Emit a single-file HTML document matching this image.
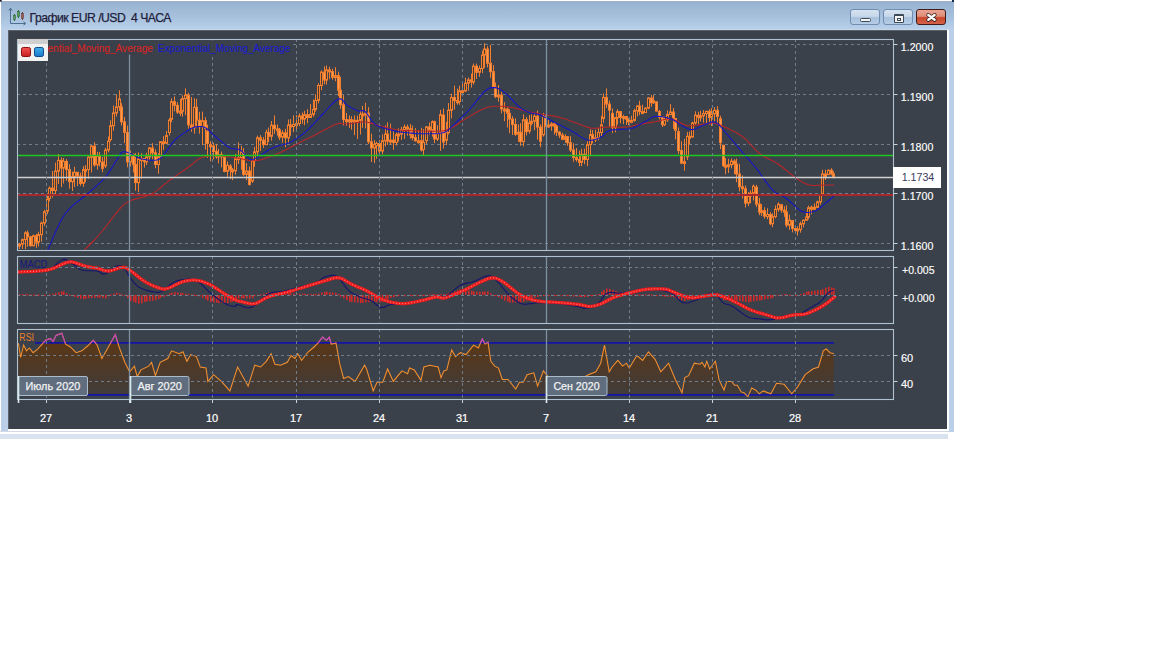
<!DOCTYPE html>
<html><head><meta charset="utf-8"><style>
html,body{margin:0;padding:0;width:1152px;height:648px;overflow:hidden;background:#ffffff;position:relative;font-family:"Liberation Sans",sans-serif}
div{position:absolute;box-sizing:border-box}
#frame{left:1px;top:1px;width:953px;height:431px;background:#bccfe8;border-top:1px solid #9fb0c2}
#title{left:1px;top:2px;width:953px;height:27px;background:linear-gradient(#97b3d1,#a7c0dc 55%,#b8d0ea)}
#tline{left:8px;top:29px;width:941px;height:1px;background:#c6d7ea}
#ttext{left:29.5px;top:10.5px;font-size:12.2px;color:#1e1e3c;white-space:pre;letter-spacing:-0.5px;-webkit-text-stroke:0.25px #1e1e3c}
#dark{left:8px;top:30px;width:939px;height:398.5px;background:#3b414a;border-left:1px solid #5b626b;border-top:1px solid #5a6068}
#wline{left:8px;top:428.5px;width:941px;height:2.5px;background:#ffffff}
#rline{left:947px;top:30px;width:2px;height:400px;background:#ffffff}
#gline{left:0px;top:431px;width:948px;height:1px;background:#d4d9e4}
#bot{left:0;top:432px;width:948px;height:7px;background:#d9e3ef;border-top:2px solid #ffffff}
.btn{top:9px;width:30px;height:16px;border:1px solid #6f8db0;border-radius:3px;background:linear-gradient(#d5e2f0 0%,#c8d8ea 45%,#a8c1dc 55%,#b6cde6 100%)}
.close{border-color:#3e1c1c;background:linear-gradient(#eaa492 0%,#de8c78 45%,#c8462a 55%,#d4644a 100%)}
</style></head><body>
<div id="frame"></div>
<div style="left:0;top:0;width:2px;height:2px;background:#2a2a3a;border-radius:0 0 2px 0"></div>
<div style="left:952px;top:0;width:2px;height:2px;background:#1a2a4a"></div>
<div id="title"></div>
<div id="tline"></div>
<div id="gline"></div>
<div id="bot"></div>
<svg width="20" height="20" style="position:absolute;left:7px;top:6px">
<path d="M3.5 17.5 V2.5 M1.8 4.5 L3.5 2.2 L5.2 4.5 M3.5 17.5 H18.5 M16.5 15.8 L18.7 17.5 L16.5 19.2" fill="none" stroke="#4e7090" stroke-width="1"/>
<path d="M7.5 8 V15" stroke="#2f6a3a" stroke-width="1"/><rect x="6.5" y="9.5" width="2" height="4" fill="#5c9c5c" stroke="#2f6a3a" stroke-width="0.6"/>
<path d="M11.5 4 V12" stroke="#2f6a3a" stroke-width="1"/><rect x="10.5" y="5.5" width="2" height="5" fill="#5c9c5c" stroke="#2f6a3a" stroke-width="0.6"/>
<path d="M15.5 6 V14" stroke="#6a3a3a" stroke-width="1"/><rect x="14.5" y="7.5" width="2" height="5" fill="#a06060" stroke="#6a3a3a" stroke-width="0.6"/>
</svg>
<div id="ttext">График EUR /USD  4 ЧАСА</div>
<div class="btn" style="left:850px"><div style="left:9px;top:7.5px;width:11px;height:4.5px;background:#f4f4f4;border:1px solid #3c4a58;border-radius:1.5px"></div></div>
<div class="btn" style="left:883px"><div style="left:10px;top:4px;width:10px;height:9px;background:#f4f4f4;border:1px solid #3c4a58;border-top-width:2px;border-radius:1px"><div style="left:2px;top:2px;width:4px;height:3px;border:1px solid #3c4a58"></div></div></div>
<div class="btn close" style="left:916px"><svg width="30" height="16" style="position:absolute;left:-1px;top:-1px"><path d="M12.3 6 L18.6 10.8 M18.6 6 L12.3 10.8" stroke="#3a2020" stroke-width="4" stroke-linecap="round"/><path d="M12.3 6 L18.6 10.8 M18.6 6 L12.3 10.8" stroke="#ffffff" stroke-width="2.4" stroke-linecap="round"/></svg></div>
<div id="dark"></div>
<div id="rline"></div>
<div id="wline"></div>
<svg width="1152" height="648" style="position:absolute;left:0;top:0">
<defs><clipPath id="mainclip"><rect x="18" y="40" width="875" height="210"/></clipPath></defs>
<line x1="293" y1="44.5" x2="890" y2="44.5" stroke="#707d8a" stroke-width="1" stroke-dasharray="3 3"/><line x1="17" y1="94.5" x2="890" y2="94.5" stroke="#707d8a" stroke-width="1" stroke-dasharray="3 3"/><line x1="17" y1="144.5" x2="890" y2="144.5" stroke="#707d8a" stroke-width="1" stroke-dasharray="3 3"/><line x1="17" y1="193.5" x2="890" y2="193.5" stroke="#707d8a" stroke-width="1" stroke-dasharray="3 3"/><line x1="17" y1="243.5" x2="890" y2="243.5" stroke="#707d8a" stroke-width="1" stroke-dasharray="3 3"/><g clip-path="url(#mainclip)"><g stroke="#f27e30" stroke-width="1"><line x1="19.5" y1="243.0" x2="19.5" y2="249.1"/><rect x="18.5" y="244.2" width="2" height="2.0" fill="#4a3a30"/><line x1="22.5" y1="238.5" x2="22.5" y2="248.9"/><rect x="21.5" y="239.6" width="2" height="4.5" fill="#4a3a30"/><line x1="25.5" y1="231.2" x2="25.5" y2="249.1"/><rect x="24.5" y="232.9" width="2" height="6.7" fill="#4a3a30"/><line x1="27.5" y1="230.4" x2="27.5" y2="246.7"/><rect x="26.5" y="232.9" width="2" height="3.8" fill="#fb9c50"/><line x1="30.5" y1="235.9" x2="30.5" y2="246.8"/><rect x="29.5" y="236.7" width="2" height="8.9" fill="#fb9c50"/><line x1="33.5" y1="234.6" x2="33.5" y2="246.3"/><rect x="32.5" y="235.7" width="2" height="10.0" fill="#4a3a30"/><line x1="36.5" y1="233.9" x2="36.5" y2="247.8"/><rect x="35.5" y="235.7" width="2" height="6.4" fill="#fb9c50"/><line x1="38.5" y1="231.7" x2="38.5" y2="246.4"/><rect x="37.5" y="234.6" width="2" height="7.5" fill="#4a3a30"/><line x1="41.5" y1="221.5" x2="41.5" y2="241.6"/><rect x="40.5" y="223.1" width="2" height="11.5" fill="#4a3a30"/><line x1="44.5" y1="209.8" x2="44.5" y2="225.8"/><rect x="43.5" y="211.8" width="2" height="11.3" fill="#4a3a30"/><line x1="47.5" y1="195.8" x2="47.5" y2="214.2"/><rect x="46.5" y="199.3" width="2" height="11.8" fill="#4a3a30"/><line x1="49.5" y1="186.4" x2="49.5" y2="201.2"/><rect x="48.5" y="188.1" width="2" height="10.4" fill="#4a3a30"/><line x1="52.5" y1="171.0" x2="52.5" y2="197.6"/><rect x="51.5" y="188.1" width="2" height="2.4" fill="#fb9c50"/><line x1="55.5" y1="162.6" x2="55.5" y2="195.3"/><rect x="54.5" y="171.1" width="2" height="19.4" fill="#4a3a30"/><line x1="58.5" y1="154.0" x2="58.5" y2="184.0"/><rect x="57.5" y="160.4" width="2" height="10.8" fill="#4a3a30"/><line x1="61.5" y1="157.4" x2="61.5" y2="187.1"/><rect x="60.5" y="160.4" width="2" height="7.6" fill="#fb9c50"/><line x1="63.5" y1="158.0" x2="63.5" y2="183.5"/><rect x="62.5" y="161.4" width="2" height="6.6" fill="#4a3a30"/><line x1="66.5" y1="159.1" x2="66.5" y2="180.7"/><rect x="65.5" y="161.4" width="2" height="8.2" fill="#fb9c50"/><line x1="69.5" y1="164.3" x2="69.5" y2="188.7"/><rect x="68.5" y="169.6" width="2" height="12.1" fill="#fb9c50"/><line x1="72.5" y1="171.7" x2="72.5" y2="191.0"/><rect x="71.5" y="176.7" width="2" height="5.0" fill="#4a3a30"/><line x1="74.5" y1="166.8" x2="74.5" y2="186.9"/><rect x="73.5" y="172.3" width="2" height="4.4" fill="#4a3a30"/><line x1="77.5" y1="172.0" x2="77.5" y2="186.1"/><rect x="76.5" y="172.3" width="2" height="3.8" fill="#fb9c50"/><line x1="80.5" y1="172.6" x2="80.5" y2="185.8"/><rect x="79.5" y="176.1" width="2" height="7.3" fill="#fb9c50"/><line x1="83.5" y1="166.1" x2="83.5" y2="186.8"/><rect x="82.5" y="169.6" width="2" height="13.8" fill="#4a3a30"/><line x1="85.5" y1="165.1" x2="85.5" y2="182.2"/><rect x="84.5" y="169.6" width="2" height="2.0" fill="#4a3a30"/><line x1="88.5" y1="156.1" x2="88.5" y2="178.8"/><rect x="87.5" y="157.2" width="2" height="12.3" fill="#4a3a30"/><line x1="91.5" y1="145.1" x2="91.5" y2="172.5"/><rect x="90.5" y="146.1" width="2" height="11.2" fill="#4a3a30"/><line x1="94.5" y1="142.2" x2="94.5" y2="166.8"/><rect x="93.5" y="146.1" width="2" height="18.8" fill="#fb9c50"/><line x1="97.5" y1="151.8" x2="97.5" y2="169.6"/><rect x="96.5" y="156.4" width="2" height="8.4" fill="#4a3a30"/><line x1="99.5" y1="152.0" x2="99.5" y2="166.4"/><rect x="98.5" y="156.4" width="2" height="5.5" fill="#fb9c50"/><line x1="102.5" y1="157.0" x2="102.5" y2="172.2"/><rect x="101.5" y="162.0" width="2" height="6.4" fill="#fb9c50"/><line x1="105.5" y1="147.8" x2="105.5" y2="167.9"/><rect x="104.5" y="150.0" width="2" height="15.9" fill="#4a3a30"/><line x1="108.5" y1="136.5" x2="108.5" y2="152.3"/><rect x="107.5" y="141.1" width="2" height="8.8" fill="#4a3a30"/><line x1="110.5" y1="120.2" x2="110.5" y2="141.5"/><rect x="109.5" y="125.7" width="2" height="13.9" fill="#4a3a30"/><line x1="113.5" y1="105.5" x2="113.5" y2="130.8"/><rect x="112.5" y="112.9" width="2" height="12.8" fill="#4a3a30"/><line x1="116.5" y1="94.3" x2="116.5" y2="116.5"/><rect x="115.5" y="107.0" width="2" height="5.9" fill="#4a3a30"/><line x1="119.5" y1="90.3" x2="119.5" y2="110.9"/><rect x="118.5" y="99.1" width="2" height="7.8" fill="#4a3a30"/><line x1="121.5" y1="103.2" x2="121.5" y2="125.5"/><rect x="120.5" y="106.9" width="2" height="14.9" fill="#fb9c50"/><line x1="124.5" y1="117.1" x2="124.5" y2="143.2"/><rect x="123.5" y="121.8" width="2" height="10.6" fill="#fb9c50"/><line x1="127.5" y1="125.6" x2="127.5" y2="167.2"/><rect x="126.5" y="132.4" width="2" height="29.5" fill="#fb9c50"/><line x1="130.5" y1="150.6" x2="130.5" y2="166.5"/><rect x="129.5" y="154.5" width="2" height="7.5" fill="#4a3a30"/><line x1="133.5" y1="153.3" x2="133.5" y2="172.5"/><rect x="132.5" y="154.5" width="2" height="10.1" fill="#fb9c50"/><line x1="135.5" y1="153.1" x2="135.5" y2="190.7"/><rect x="134.5" y="164.5" width="2" height="18.1" fill="#fb9c50"/><line x1="138.5" y1="152.4" x2="138.5" y2="192.0"/><rect x="137.5" y="158.9" width="2" height="23.8" fill="#4a3a30"/><line x1="141.5" y1="153.2" x2="141.5" y2="178.9"/><rect x="140.5" y="158.5" width="2" height="2.0" fill="#4a3a30"/><line x1="144.5" y1="158.2" x2="144.5" y2="167.6"/><rect x="143.5" y="158.6" width="2" height="3.2" fill="#fb9c50"/><line x1="146.5" y1="152.8" x2="146.5" y2="165.0"/><rect x="145.5" y="156.9" width="2" height="4.9" fill="#4a3a30"/><line x1="149.5" y1="146.9" x2="149.5" y2="160.5"/><rect x="148.5" y="148.0" width="2" height="8.9" fill="#4a3a30"/><line x1="152.5" y1="143.2" x2="152.5" y2="159.4"/><rect x="151.5" y="148.0" width="2" height="4.9" fill="#fb9c50"/><line x1="155.5" y1="149.4" x2="155.5" y2="168.2"/><rect x="154.5" y="152.8" width="2" height="11.7" fill="#fb9c50"/><line x1="158.5" y1="153.3" x2="158.5" y2="173.8"/><rect x="157.5" y="156.7" width="2" height="7.9" fill="#4a3a30"/><line x1="160.5" y1="141.7" x2="160.5" y2="157.4"/><rect x="159.5" y="141.7" width="2" height="15.0" fill="#4a3a30"/><line x1="163.5" y1="136.1" x2="163.5" y2="149.9"/><rect x="162.5" y="141.7" width="2" height="2.0" fill="#fb9c50"/><line x1="166.5" y1="131.0" x2="166.5" y2="144.2"/><rect x="165.5" y="135.6" width="2" height="7.7" fill="#4a3a30"/><line x1="169.5" y1="118.0" x2="169.5" y2="135.6"/><rect x="168.5" y="120.1" width="2" height="12.5" fill="#4a3a30"/><line x1="171.5" y1="98.3" x2="171.5" y2="122.2"/><rect x="170.5" y="101.6" width="2" height="17.8" fill="#4a3a30"/><line x1="174.5" y1="96.4" x2="174.5" y2="111.3"/><rect x="173.5" y="101.6" width="2" height="3.7" fill="#fb9c50"/><line x1="177.5" y1="102.2" x2="177.5" y2="113.9"/><rect x="176.5" y="105.3" width="2" height="6.8" fill="#fb9c50"/><line x1="180.5" y1="98.9" x2="180.5" y2="116.1"/><rect x="179.5" y="111.3" width="2" height="2.0" fill="#4a3a30"/><line x1="182.5" y1="95.3" x2="182.5" y2="116.7"/><rect x="181.5" y="98.6" width="2" height="12.7" fill="#4a3a30"/><line x1="185.5" y1="88.4" x2="185.5" y2="115.2"/><rect x="184.5" y="95.0" width="2" height="3.6" fill="#4a3a30"/><line x1="188.5" y1="92.9" x2="188.5" y2="128.6"/><rect x="187.5" y="95.0" width="2" height="29.9" fill="#fb9c50"/><line x1="191.5" y1="97.0" x2="191.5" y2="131.7"/><rect x="190.5" y="124.9" width="2" height="2.9" fill="#fb9c50"/><line x1="194.5" y1="98.2" x2="194.5" y2="133.7"/><rect x="193.5" y="107.3" width="2" height="20.5" fill="#4a3a30"/><line x1="196.5" y1="98.9" x2="196.5" y2="127.1"/><rect x="195.5" y="107.3" width="2" height="12.9" fill="#fb9c50"/><line x1="199.5" y1="111.8" x2="199.5" y2="133.7"/><rect x="198.5" y="120.2" width="2" height="6.5" fill="#fb9c50"/><line x1="202.5" y1="111.6" x2="202.5" y2="145.1"/><rect x="201.5" y="120.7" width="2" height="6.0" fill="#4a3a30"/><line x1="205.5" y1="117.2" x2="205.5" y2="149.6"/><rect x="204.5" y="120.7" width="2" height="7.8" fill="#fb9c50"/><line x1="207.5" y1="124.7" x2="207.5" y2="157.9"/><rect x="206.5" y="131.0" width="2" height="12.5" fill="#fb9c50"/><line x1="210.5" y1="141.2" x2="210.5" y2="161.3"/><rect x="209.5" y="144.8" width="2" height="2.0" fill="#fb9c50"/><line x1="213.5" y1="142.7" x2="213.5" y2="159.4"/><rect x="212.5" y="146.0" width="2" height="5.5" fill="#fb9c50"/><line x1="216.5" y1="144.0" x2="216.5" y2="158.8"/><rect x="215.5" y="151.4" width="2" height="5.4" fill="#fb9c50"/><line x1="218.5" y1="148.9" x2="218.5" y2="163.3"/><rect x="217.5" y="154.6" width="2" height="2.2" fill="#4a3a30"/><line x1="221.5" y1="151.6" x2="221.5" y2="167.4"/><rect x="220.5" y="154.6" width="2" height="2.3" fill="#fb9c50"/><line x1="224.5" y1="155.7" x2="224.5" y2="172.3"/><rect x="223.5" y="157.0" width="2" height="14.4" fill="#fb9c50"/><line x1="227.5" y1="161.4" x2="227.5" y2="176.9"/><rect x="226.5" y="165.3" width="2" height="6.1" fill="#4a3a30"/><line x1="230.5" y1="164.1" x2="230.5" y2="179.1"/><rect x="229.5" y="166.0" width="2" height="3.9" fill="#fb9c50"/><line x1="232.5" y1="168.0" x2="232.5" y2="180.1"/><rect x="231.5" y="169.9" width="2" height="2.0" fill="#fb9c50"/><line x1="235.5" y1="153.9" x2="235.5" y2="174.8"/><rect x="234.5" y="158.7" width="2" height="12.1" fill="#4a3a30"/><line x1="238.5" y1="142.3" x2="238.5" y2="164.0"/><rect x="237.5" y="157.6" width="2" height="2.0" fill="#4a3a30"/><line x1="241.5" y1="145.8" x2="241.5" y2="169.8"/><rect x="240.5" y="151.8" width="2" height="5.8" fill="#4a3a30"/><line x1="243.5" y1="148.2" x2="243.5" y2="175.9"/><rect x="242.5" y="153.1" width="2" height="21.3" fill="#fb9c50"/><line x1="246.5" y1="163.1" x2="246.5" y2="180.2"/><rect x="245.5" y="171.0" width="2" height="3.4" fill="#4a3a30"/><line x1="249.5" y1="166.5" x2="249.5" y2="185.6"/><rect x="248.5" y="171.0" width="2" height="13.5" fill="#fb9c50"/><line x1="252.5" y1="159.1" x2="252.5" y2="182.9"/><rect x="251.5" y="160.9" width="2" height="20.1" fill="#4a3a30"/><line x1="254.5" y1="146.9" x2="254.5" y2="166.8"/><rect x="253.5" y="151.9" width="2" height="8.9" fill="#4a3a30"/><line x1="257.5" y1="135.6" x2="257.5" y2="157.0"/><rect x="256.5" y="137.8" width="2" height="14.1" fill="#4a3a30"/><line x1="260.5" y1="135.1" x2="260.5" y2="151.1"/><rect x="259.5" y="137.8" width="2" height="2.4" fill="#fb9c50"/><line x1="263.5" y1="137.1" x2="263.5" y2="148.0"/><rect x="262.5" y="140.2" width="2" height="4.4" fill="#fb9c50"/><line x1="266.5" y1="129.7" x2="266.5" y2="144.8"/><rect x="265.5" y="132.4" width="2" height="12.2" fill="#4a3a30"/><line x1="268.5" y1="127.6" x2="268.5" y2="142.1"/><rect x="267.5" y="132.4" width="2" height="4.0" fill="#fb9c50"/><line x1="271.5" y1="121.0" x2="271.5" y2="140.6"/><rect x="270.5" y="125.3" width="2" height="11.0" fill="#4a3a30"/><line x1="274.5" y1="115.4" x2="274.5" y2="133.9"/><rect x="273.5" y="125.3" width="2" height="3.4" fill="#fb9c50"/><line x1="277.5" y1="124.5" x2="277.5" y2="135.6"/><rect x="276.5" y="128.8" width="2" height="2.0" fill="#fb9c50"/><line x1="279.5" y1="128.0" x2="279.5" y2="140.1"/><rect x="278.5" y="129.8" width="2" height="7.4" fill="#fb9c50"/><line x1="282.5" y1="130.3" x2="282.5" y2="142.7"/><rect x="281.5" y="132.8" width="2" height="4.3" fill="#4a3a30"/><line x1="285.5" y1="128.8" x2="285.5" y2="147.1"/><rect x="284.5" y="132.8" width="2" height="5.0" fill="#fb9c50"/><line x1="288.5" y1="119.5" x2="288.5" y2="143.3"/><rect x="287.5" y="125.0" width="2" height="12.8" fill="#4a3a30"/><line x1="290.5" y1="119.0" x2="290.5" y2="135.8"/><rect x="289.5" y="125.0" width="2" height="2.0" fill="#fb9c50"/><line x1="293.5" y1="115.4" x2="293.5" y2="132.2"/><rect x="292.5" y="124.5" width="2" height="2.0" fill="#4a3a30"/><line x1="296.5" y1="115.1" x2="296.5" y2="129.8"/><rect x="295.5" y="123.6" width="2" height="2.0" fill="#4a3a30"/><line x1="299.5" y1="113.3" x2="299.5" y2="126.2"/><rect x="298.5" y="115.9" width="2" height="7.7" fill="#4a3a30"/><line x1="302.5" y1="112.5" x2="302.5" y2="123.8"/><rect x="301.5" y="115.9" width="2" height="3.1" fill="#fb9c50"/><line x1="304.5" y1="110.8" x2="304.5" y2="125.2"/><rect x="303.5" y="114.7" width="2" height="4.3" fill="#4a3a30"/><line x1="307.5" y1="109.2" x2="307.5" y2="123.3"/><rect x="306.5" y="114.7" width="2" height="2.8" fill="#fb9c50"/><line x1="310.5" y1="104.1" x2="310.5" y2="118.1"/><rect x="309.5" y="114.4" width="2" height="3.0" fill="#4a3a30"/><line x1="313.5" y1="99.5" x2="313.5" y2="116.8"/><rect x="312.5" y="109.5" width="2" height="4.9" fill="#4a3a30"/><line x1="315.5" y1="94.3" x2="315.5" y2="111.6"/><rect x="314.5" y="100.4" width="2" height="9.0" fill="#4a3a30"/><line x1="318.5" y1="83.2" x2="318.5" y2="103.3"/><rect x="317.5" y="85.5" width="2" height="14.9" fill="#4a3a30"/><line x1="321.5" y1="70.3" x2="321.5" y2="90.1"/><rect x="320.5" y="72.1" width="2" height="13.4" fill="#4a3a30"/><line x1="324.5" y1="66.3" x2="324.5" y2="84.3"/><rect x="323.5" y="72.1" width="2" height="7.9" fill="#fb9c50"/><line x1="326.5" y1="65.5" x2="326.5" y2="84.6"/><rect x="325.5" y="69.9" width="2" height="10.2" fill="#4a3a30"/><line x1="329.5" y1="66.7" x2="329.5" y2="79.2"/><rect x="328.5" y="69.9" width="2" height="2.0" fill="#fb9c50"/><line x1="332.5" y1="68.7" x2="332.5" y2="79.8"/><rect x="331.5" y="71.5" width="2" height="5.9" fill="#fb9c50"/><line x1="335.5" y1="67.2" x2="335.5" y2="81.2"/><rect x="334.5" y="75.6" width="2" height="2.0" fill="#4a3a30"/><line x1="338.5" y1="71.7" x2="338.5" y2="96.1"/><rect x="337.5" y="75.6" width="2" height="14.6" fill="#fb9c50"/><line x1="340.5" y1="76.8" x2="340.5" y2="108.8"/><rect x="339.5" y="90.2" width="2" height="14.5" fill="#fb9c50"/><line x1="343.5" y1="95.2" x2="343.5" y2="125.4"/><rect x="342.5" y="104.8" width="2" height="14.8" fill="#fb9c50"/><line x1="346.5" y1="112.9" x2="346.5" y2="125.7"/><rect x="345.5" y="119.6" width="2" height="2.0" fill="#fb9c50"/><line x1="349.5" y1="115.5" x2="349.5" y2="127.9"/><rect x="348.5" y="119.8" width="2" height="2.0" fill="#4a3a30"/><line x1="351.5" y1="116.2" x2="351.5" y2="129.7"/><rect x="350.5" y="119.8" width="2" height="2.0" fill="#fb9c50"/><line x1="354.5" y1="115.4" x2="354.5" y2="135.2"/><rect x="353.5" y="120.2" width="2" height="2.0" fill="#fb9c50"/><line x1="357.5" y1="115.6" x2="357.5" y2="139.0"/><rect x="356.5" y="120.4" width="2" height="2.0" fill="#4a3a30"/><line x1="360.5" y1="110.7" x2="360.5" y2="134.5"/><rect x="359.5" y="114.5" width="2" height="5.9" fill="#4a3a30"/><line x1="362.5" y1="105.9" x2="362.5" y2="127.9"/><rect x="361.5" y="114.0" width="2" height="2.0" fill="#4a3a30"/><line x1="365.5" y1="102.8" x2="365.5" y2="128.3"/><rect x="364.5" y="113.1" width="2" height="2.0" fill="#4a3a30"/><line x1="368.5" y1="107.1" x2="368.5" y2="144.1"/><rect x="367.5" y="113.1" width="2" height="28.7" fill="#fb9c50"/><line x1="371.5" y1="133.7" x2="371.5" y2="162.0"/><rect x="370.5" y="141.8" width="2" height="6.1" fill="#fb9c50"/><line x1="374.5" y1="140.1" x2="374.5" y2="163.0"/><rect x="373.5" y="144.5" width="2" height="3.4" fill="#4a3a30"/><line x1="376.5" y1="141.7" x2="376.5" y2="158.7"/><rect x="375.5" y="143.5" width="2" height="2.0" fill="#4a3a30"/><line x1="379.5" y1="140.1" x2="379.5" y2="154.8"/><rect x="378.5" y="143.5" width="2" height="7.5" fill="#fb9c50"/><line x1="382.5" y1="134.3" x2="382.5" y2="154.2"/><rect x="381.5" y="140.7" width="2" height="10.3" fill="#4a3a30"/><line x1="385.5" y1="125.3" x2="385.5" y2="146.4"/><rect x="384.5" y="134.1" width="2" height="6.6" fill="#4a3a30"/><line x1="387.5" y1="122.4" x2="387.5" y2="144.9"/><rect x="386.5" y="134.1" width="2" height="7.1" fill="#fb9c50"/><line x1="390.5" y1="123.5" x2="390.5" y2="144.6"/><rect x="389.5" y="140.1" width="2" height="2.0" fill="#4a3a30"/><line x1="393.5" y1="130.8" x2="393.5" y2="149.8"/><rect x="392.5" y="140.1" width="2" height="2.4" fill="#fb9c50"/><line x1="396.5" y1="132.7" x2="396.5" y2="145.4"/><rect x="395.5" y="134.7" width="2" height="7.8" fill="#4a3a30"/><line x1="398.5" y1="128.4" x2="398.5" y2="141.5"/><rect x="397.5" y="134.0" width="2" height="2.0" fill="#4a3a30"/><line x1="401.5" y1="126.9" x2="401.5" y2="139.9"/><rect x="400.5" y="129.7" width="2" height="4.3" fill="#4a3a30"/><line x1="404.5" y1="124.4" x2="404.5" y2="138.9"/><rect x="403.5" y="127.0" width="2" height="2.7" fill="#4a3a30"/><line x1="407.5" y1="124.6" x2="407.5" y2="135.6"/><rect x="406.5" y="127.0" width="2" height="2.0" fill="#fb9c50"/><line x1="410.5" y1="124.2" x2="410.5" y2="138.6"/><rect x="409.5" y="128.8" width="2" height="6.1" fill="#fb9c50"/><line x1="412.5" y1="125.6" x2="412.5" y2="140.4"/><rect x="411.5" y="134.9" width="2" height="2.7" fill="#fb9c50"/><line x1="415.5" y1="128.2" x2="415.5" y2="141.6"/><rect x="414.5" y="137.5" width="2" height="3.3" fill="#fb9c50"/><line x1="418.5" y1="130.1" x2="418.5" y2="143.6"/><rect x="417.5" y="140.7" width="2" height="2.0" fill="#4a3a30"/><line x1="421.5" y1="127.8" x2="421.5" y2="151.5"/><rect x="420.5" y="140.7" width="2" height="9.3" fill="#fb9c50"/><line x1="423.5" y1="129.0" x2="423.5" y2="155.6"/><rect x="422.5" y="142.4" width="2" height="7.1" fill="#4a3a30"/><line x1="426.5" y1="126.1" x2="426.5" y2="144.0"/><rect x="425.5" y="126.9" width="2" height="13.8" fill="#4a3a30"/><line x1="429.5" y1="122.5" x2="429.5" y2="135.0"/><rect x="428.5" y="126.9" width="2" height="3.4" fill="#fb9c50"/><line x1="432.5" y1="120.4" x2="432.5" y2="136.6"/><rect x="431.5" y="121.6" width="2" height="8.6" fill="#4a3a30"/><line x1="434.5" y1="120.6" x2="434.5" y2="143.1"/><rect x="433.5" y="121.6" width="2" height="17.4" fill="#fb9c50"/><line x1="437.5" y1="125.3" x2="437.5" y2="141.0"/><rect x="436.5" y="133.4" width="2" height="5.7" fill="#4a3a30"/><line x1="440.5" y1="109.9" x2="440.5" y2="150.9"/><rect x="439.5" y="114.6" width="2" height="18.7" fill="#4a3a30"/><line x1="443.5" y1="108.5" x2="443.5" y2="148.5"/><rect x="442.5" y="115.0" width="2" height="27.0" fill="#fb9c50"/><line x1="446.5" y1="121.9" x2="446.5" y2="145.0"/><rect x="445.5" y="132.5" width="2" height="7.7" fill="#4a3a30"/><line x1="448.5" y1="103.1" x2="448.5" y2="134.4"/><rect x="447.5" y="110.2" width="2" height="22.3" fill="#4a3a30"/><line x1="451.5" y1="93.8" x2="451.5" y2="118.3"/><rect x="450.5" y="97.5" width="2" height="12.8" fill="#4a3a30"/><line x1="454.5" y1="85.6" x2="454.5" y2="109.6"/><rect x="453.5" y="97.5" width="2" height="3.2" fill="#fb9c50"/><line x1="457.5" y1="88.6" x2="457.5" y2="104.7"/><rect x="456.5" y="100.6" width="2" height="2.1" fill="#fb9c50"/><line x1="459.5" y1="85.7" x2="459.5" y2="104.8"/><rect x="458.5" y="90.8" width="2" height="10.7" fill="#4a3a30"/><line x1="462.5" y1="81.9" x2="462.5" y2="96.3"/><rect x="461.5" y="90.8" width="2" height="2.0" fill="#fb9c50"/><line x1="465.5" y1="77.7" x2="465.5" y2="91.9"/><rect x="464.5" y="83.2" width="2" height="7.8" fill="#4a3a30"/><line x1="468.5" y1="77.5" x2="468.5" y2="90.5"/><rect x="467.5" y="79.9" width="2" height="3.3" fill="#4a3a30"/><line x1="471.5" y1="73.6" x2="471.5" y2="87.6"/><rect x="470.5" y="79.9" width="2" height="2.1" fill="#fb9c50"/><line x1="473.5" y1="63.5" x2="473.5" y2="84.5"/><rect x="472.5" y="66.2" width="2" height="15.8" fill="#4a3a30"/><line x1="476.5" y1="63.6" x2="476.5" y2="79.0"/><rect x="475.5" y="66.2" width="2" height="6.1" fill="#fb9c50"/><line x1="479.5" y1="65.6" x2="479.5" y2="76.9"/><rect x="478.5" y="68.5" width="2" height="3.8" fill="#4a3a30"/><line x1="482.5" y1="50.7" x2="482.5" y2="73.1"/><rect x="481.5" y="55.2" width="2" height="13.3" fill="#4a3a30"/><line x1="484.5" y1="43.2" x2="484.5" y2="67.9"/><rect x="483.5" y="49.0" width="2" height="6.1" fill="#4a3a30"/><line x1="487.5" y1="46.2" x2="487.5" y2="67.4"/><rect x="486.5" y="49.0" width="2" height="14.2" fill="#fb9c50"/><line x1="490.5" y1="44.9" x2="490.5" y2="77.8"/><rect x="489.5" y="63.2" width="2" height="8.5" fill="#fb9c50"/><line x1="493.5" y1="65.2" x2="493.5" y2="88.1"/><rect x="492.5" y="71.7" width="2" height="15.7" fill="#fb9c50"/><line x1="495.5" y1="82.4" x2="495.5" y2="98.2"/><rect x="494.5" y="87.4" width="2" height="9.1" fill="#fb9c50"/><line x1="498.5" y1="85.0" x2="498.5" y2="101.6"/><rect x="497.5" y="95.1" width="2" height="2.0" fill="#4a3a30"/><line x1="501.5" y1="91.6" x2="501.5" y2="113.3"/><rect x="500.5" y="95.1" width="2" height="13.8" fill="#fb9c50"/><line x1="504.5" y1="102.1" x2="504.5" y2="121.2"/><rect x="503.5" y="109.0" width="2" height="2.0" fill="#fb9c50"/><line x1="507.5" y1="107.3" x2="507.5" y2="127.6"/><rect x="506.5" y="109.1" width="2" height="4.3" fill="#fb9c50"/><line x1="509.5" y1="109.2" x2="509.5" y2="133.1"/><rect x="508.5" y="113.3" width="2" height="5.8" fill="#fb9c50"/><line x1="512.5" y1="116.2" x2="512.5" y2="135.0"/><rect x="511.5" y="119.1" width="2" height="5.4" fill="#fb9c50"/><line x1="515.5" y1="118.4" x2="515.5" y2="135.9"/><rect x="514.5" y="124.5" width="2" height="9.8" fill="#fb9c50"/><line x1="518.5" y1="124.4" x2="518.5" y2="141.7"/><rect x="517.5" y="132.3" width="2" height="2.0" fill="#4a3a30"/><line x1="520.5" y1="123.2" x2="520.5" y2="145.8"/><rect x="519.5" y="132.3" width="2" height="9.3" fill="#fb9c50"/><line x1="523.5" y1="114.4" x2="523.5" y2="146.4"/><rect x="522.5" y="119.7" width="2" height="21.9" fill="#4a3a30"/><line x1="526.5" y1="116.9" x2="526.5" y2="135.4"/><rect x="525.5" y="119.7" width="2" height="11.9" fill="#fb9c50"/><line x1="529.5" y1="115.1" x2="529.5" y2="133.7"/><rect x="528.5" y="122.8" width="2" height="8.3" fill="#4a3a30"/><line x1="531.5" y1="114.3" x2="531.5" y2="125.4"/><rect x="530.5" y="121.3" width="2" height="2.0" fill="#4a3a30"/><line x1="534.5" y1="113.9" x2="534.5" y2="130.3"/><rect x="533.5" y="116.2" width="2" height="5.1" fill="#4a3a30"/><line x1="537.5" y1="110.6" x2="537.5" y2="139.7"/><rect x="536.5" y="116.2" width="2" height="10.9" fill="#fb9c50"/><line x1="540.5" y1="124.4" x2="540.5" y2="147.3"/><rect x="539.5" y="127.1" width="2" height="14.1" fill="#fb9c50"/><line x1="543.5" y1="112.9" x2="543.5" y2="136.6"/><rect x="542.5" y="116.5" width="2" height="18.3" fill="#4a3a30"/><line x1="545.5" y1="115.1" x2="545.5" y2="127.1"/><rect x="544.5" y="116.5" width="2" height="9.4" fill="#fb9c50"/><line x1="548.5" y1="119.5" x2="548.5" y2="127.9"/><rect x="547.5" y="125.0" width="2" height="2.0" fill="#4a3a30"/><line x1="551.5" y1="122.2" x2="551.5" y2="130.7"/><rect x="550.5" y="123.8" width="2" height="2.0" fill="#4a3a30"/><line x1="554.5" y1="121.9" x2="554.5" y2="134.5"/><rect x="553.5" y="123.8" width="2" height="2.5" fill="#fb9c50"/><line x1="556.5" y1="124.6" x2="556.5" y2="136.0"/><rect x="555.5" y="126.2" width="2" height="5.9" fill="#fb9c50"/><line x1="559.5" y1="131.1" x2="559.5" y2="138.0"/><rect x="558.5" y="132.2" width="2" height="2.8" fill="#fb9c50"/><line x1="562.5" y1="132.8" x2="562.5" y2="140.1"/><rect x="561.5" y="135.0" width="2" height="4.4" fill="#fb9c50"/><line x1="565.5" y1="134.2" x2="565.5" y2="142.8"/><rect x="564.5" y="136.6" width="2" height="2.8" fill="#4a3a30"/><line x1="567.5" y1="136.3" x2="567.5" y2="145.8"/><rect x="566.5" y="136.6" width="2" height="6.1" fill="#fb9c50"/><line x1="570.5" y1="136.2" x2="570.5" y2="152.0"/><rect x="569.5" y="142.7" width="2" height="7.3" fill="#fb9c50"/><line x1="573.5" y1="143.3" x2="573.5" y2="161.8"/><rect x="572.5" y="150.0" width="2" height="7.5" fill="#fb9c50"/><line x1="576.5" y1="148.0" x2="576.5" y2="161.7"/><rect x="575.5" y="157.6" width="2" height="2.0" fill="#fb9c50"/><line x1="579.5" y1="150.7" x2="579.5" y2="166.2"/><rect x="578.5" y="159.5" width="2" height="2.9" fill="#fb9c50"/><line x1="581.5" y1="148.8" x2="581.5" y2="166.2"/><rect x="580.5" y="154.3" width="2" height="8.1" fill="#4a3a30"/><line x1="584.5" y1="148.7" x2="584.5" y2="164.2"/><rect x="583.5" y="154.3" width="2" height="5.2" fill="#fb9c50"/><line x1="587.5" y1="141.1" x2="587.5" y2="166.2"/><rect x="586.5" y="144.6" width="2" height="14.9" fill="#4a3a30"/><line x1="590.5" y1="129.3" x2="590.5" y2="156.1"/><rect x="589.5" y="134.6" width="2" height="9.9" fill="#4a3a30"/><line x1="592.5" y1="130.1" x2="592.5" y2="143.3"/><rect x="591.5" y="134.6" width="2" height="4.5" fill="#fb9c50"/><line x1="595.5" y1="129.7" x2="595.5" y2="142.0"/><rect x="594.5" y="137.9" width="2" height="2.0" fill="#4a3a30"/><line x1="598.5" y1="128.0" x2="598.5" y2="140.2"/><rect x="597.5" y="132.5" width="2" height="5.4" fill="#4a3a30"/><line x1="601.5" y1="115.8" x2="601.5" y2="136.0"/><rect x="600.5" y="124.8" width="2" height="7.7" fill="#4a3a30"/><line x1="603.5" y1="93.5" x2="603.5" y2="122.7"/><rect x="602.5" y="97.4" width="2" height="21.0" fill="#4a3a30"/><line x1="606.5" y1="88.5" x2="606.5" y2="107.9"/><rect x="605.5" y="97.4" width="2" height="6.7" fill="#fb9c50"/><line x1="609.5" y1="100.7" x2="609.5" y2="126.9"/><rect x="608.5" y="104.1" width="2" height="6.1" fill="#fb9c50"/><line x1="612.5" y1="108.4" x2="612.5" y2="133.1"/><rect x="611.5" y="113.4" width="2" height="14.3" fill="#fb9c50"/><line x1="615.5" y1="117.7" x2="615.5" y2="132.3"/><rect x="614.5" y="117.7" width="2" height="10.0" fill="#4a3a30"/><line x1="617.5" y1="109.3" x2="617.5" y2="124.5"/><rect x="616.5" y="111.6" width="2" height="6.1" fill="#4a3a30"/><line x1="620.5" y1="111.2" x2="620.5" y2="123.3"/><rect x="619.5" y="111.6" width="2" height="5.9" fill="#fb9c50"/><line x1="623.5" y1="114.7" x2="623.5" y2="124.1"/><rect x="622.5" y="116.6" width="2" height="2.0" fill="#4a3a30"/><line x1="626.5" y1="116.6" x2="626.5" y2="124.9"/><rect x="625.5" y="116.6" width="2" height="2.7" fill="#fb9c50"/><line x1="628.5" y1="118.3" x2="628.5" y2="125.2"/><rect x="627.5" y="119.2" width="2" height="2.6" fill="#fb9c50"/><line x1="631.5" y1="115.7" x2="631.5" y2="123.2"/><rect x="630.5" y="120.4" width="2" height="2.0" fill="#4a3a30"/><line x1="634.5" y1="108.7" x2="634.5" y2="121.8"/><rect x="633.5" y="110.7" width="2" height="9.7" fill="#4a3a30"/><line x1="637.5" y1="105.4" x2="637.5" y2="116.5"/><rect x="636.5" y="106.0" width="2" height="4.7" fill="#4a3a30"/><line x1="639.5" y1="100.8" x2="639.5" y2="115.1"/><rect x="638.5" y="106.0" width="2" height="5.6" fill="#fb9c50"/><line x1="642.5" y1="104.7" x2="642.5" y2="112.5"/><rect x="641.5" y="111.6" width="2" height="2.0" fill="#fb9c50"/><line x1="645.5" y1="107.5" x2="645.5" y2="113.1"/><rect x="644.5" y="108.1" width="2" height="4.4" fill="#4a3a30"/><line x1="648.5" y1="97.3" x2="648.5" y2="109.2"/><rect x="647.5" y="98.0" width="2" height="10.1" fill="#4a3a30"/><line x1="651.5" y1="95.0" x2="651.5" y2="106.7"/><rect x="650.5" y="98.0" width="2" height="4.7" fill="#fb9c50"/><line x1="653.5" y1="95.2" x2="653.5" y2="104.0"/><rect x="652.5" y="100.7" width="2" height="2.0" fill="#4a3a30"/><line x1="656.5" y1="101.5" x2="656.5" y2="111.2"/><rect x="655.5" y="101.9" width="2" height="9.2" fill="#fb9c50"/><line x1="659.5" y1="110.0" x2="659.5" y2="119.4"/><rect x="658.5" y="111.6" width="2" height="5.6" fill="#fb9c50"/><line x1="662.5" y1="116.4" x2="662.5" y2="127.0"/><rect x="661.5" y="117.2" width="2" height="7.5" fill="#fb9c50"/><line x1="664.5" y1="116.6" x2="664.5" y2="125.9"/><rect x="663.5" y="119.6" width="2" height="5.1" fill="#4a3a30"/><line x1="667.5" y1="110.5" x2="667.5" y2="121.8"/><rect x="666.5" y="114.6" width="2" height="5.1" fill="#4a3a30"/><line x1="670.5" y1="104.1" x2="670.5" y2="114.9"/><rect x="669.5" y="112.0" width="2" height="2.6" fill="#4a3a30"/><line x1="673.5" y1="108.0" x2="673.5" y2="128.9"/><rect x="672.5" y="112.0" width="2" height="5.5" fill="#fb9c50"/><line x1="675.5" y1="118.3" x2="675.5" y2="139.4"/><rect x="674.5" y="118.5" width="2" height="11.8" fill="#fb9c50"/><line x1="678.5" y1="127.5" x2="678.5" y2="153.9"/><rect x="677.5" y="131.6" width="2" height="19.0" fill="#fb9c50"/><line x1="681.5" y1="141.2" x2="681.5" y2="163.7"/><rect x="680.5" y="150.5" width="2" height="12.7" fill="#fb9c50"/><line x1="684.5" y1="138.9" x2="684.5" y2="170.6"/><rect x="683.5" y="161.6" width="2" height="2.0" fill="#4a3a30"/><line x1="687.5" y1="132.0" x2="687.5" y2="160.0"/><rect x="686.5" y="136.3" width="2" height="20.5" fill="#4a3a30"/><line x1="689.5" y1="131.7" x2="689.5" y2="144.5"/><rect x="688.5" y="136.3" width="2" height="2.0" fill="#fb9c50"/><line x1="692.5" y1="121.8" x2="692.5" y2="137.2"/><rect x="691.5" y="123.0" width="2" height="14.1" fill="#4a3a30"/><line x1="695.5" y1="111.3" x2="695.5" y2="124.7"/><rect x="694.5" y="115.2" width="2" height="7.8" fill="#4a3a30"/><line x1="698.5" y1="111.8" x2="698.5" y2="124.1"/><rect x="697.5" y="115.2" width="2" height="2.0" fill="#fb9c50"/><line x1="700.5" y1="110.8" x2="700.5" y2="121.6"/><rect x="699.5" y="115.8" width="2" height="2.0" fill="#4a3a30"/><line x1="703.5" y1="110.1" x2="703.5" y2="122.6"/><rect x="702.5" y="113.5" width="2" height="2.3" fill="#4a3a30"/><line x1="706.5" y1="110.7" x2="706.5" y2="123.5"/><rect x="705.5" y="111.4" width="2" height="2.1" fill="#4a3a30"/><line x1="709.5" y1="109.1" x2="709.5" y2="124.5"/><rect x="708.5" y="111.4" width="2" height="6.1" fill="#fb9c50"/><line x1="711.5" y1="108.1" x2="711.5" y2="126.1"/><rect x="710.5" y="113.7" width="2" height="3.7" fill="#4a3a30"/><line x1="714.5" y1="107.2" x2="714.5" y2="121.9"/><rect x="713.5" y="110.4" width="2" height="3.4" fill="#4a3a30"/><line x1="717.5" y1="106.2" x2="717.5" y2="125.1"/><rect x="716.5" y="110.4" width="2" height="6.1" fill="#fb9c50"/><line x1="720.5" y1="115.8" x2="720.5" y2="149.1"/><rect x="719.5" y="118.7" width="2" height="23.9" fill="#fb9c50"/><line x1="723.5" y1="145.2" x2="723.5" y2="166.9"/><rect x="722.5" y="145.3" width="2" height="20.3" fill="#fb9c50"/><line x1="725.5" y1="158.1" x2="725.5" y2="174.2"/><rect x="724.5" y="165.3" width="2" height="2.0" fill="#4a3a30"/><line x1="728.5" y1="158.8" x2="728.5" y2="173.1"/><rect x="727.5" y="164.7" width="2" height="2.0" fill="#4a3a30"/><line x1="731.5" y1="158.4" x2="731.5" y2="168.4"/><rect x="730.5" y="161.1" width="2" height="3.6" fill="#4a3a30"/><line x1="734.5" y1="159.2" x2="734.5" y2="174.1"/><rect x="733.5" y="161.1" width="2" height="3.0" fill="#fb9c50"/><line x1="736.5" y1="158.6" x2="736.5" y2="182.3"/><rect x="735.5" y="164.0" width="2" height="10.0" fill="#fb9c50"/><line x1="739.5" y1="163.9" x2="739.5" y2="191.4"/><rect x="738.5" y="174.0" width="2" height="12.8" fill="#fb9c50"/><line x1="742.5" y1="175.4" x2="742.5" y2="198.5"/><rect x="741.5" y="186.8" width="2" height="2.0" fill="#fb9c50"/><line x1="745.5" y1="185.5" x2="745.5" y2="207.5"/><rect x="744.5" y="188.8" width="2" height="14.4" fill="#fb9c50"/><line x1="748.5" y1="192.2" x2="748.5" y2="206.1"/><rect x="747.5" y="196.1" width="2" height="7.0" fill="#4a3a30"/><line x1="750.5" y1="190.3" x2="750.5" y2="203.2"/><rect x="749.5" y="193.2" width="2" height="2.9" fill="#4a3a30"/><line x1="753.5" y1="184.6" x2="753.5" y2="200.5"/><rect x="752.5" y="186.2" width="2" height="7.0" fill="#4a3a30"/><line x1="756.5" y1="184.9" x2="756.5" y2="207.0"/><rect x="755.5" y="187.2" width="2" height="16.9" fill="#fb9c50"/><line x1="759.5" y1="197.9" x2="759.5" y2="215.2"/><rect x="758.5" y="204.0" width="2" height="8.2" fill="#fb9c50"/><line x1="761.5" y1="204.1" x2="761.5" y2="215.9"/><rect x="760.5" y="210.6" width="2" height="2.0" fill="#4a3a30"/><line x1="764.5" y1="207.3" x2="764.5" y2="218.6"/><rect x="763.5" y="210.6" width="2" height="5.5" fill="#fb9c50"/><line x1="767.5" y1="208.3" x2="767.5" y2="219.3"/><rect x="766.5" y="214.5" width="2" height="2.0" fill="#4a3a30"/><line x1="770.5" y1="212.2" x2="770.5" y2="225.2"/><rect x="769.5" y="214.5" width="2" height="9.2" fill="#fb9c50"/><line x1="772.5" y1="213.4" x2="772.5" y2="227.2"/><rect x="771.5" y="216.6" width="2" height="7.1" fill="#4a3a30"/><line x1="775.5" y1="205.5" x2="775.5" y2="218.3"/><rect x="774.5" y="209.3" width="2" height="7.3" fill="#4a3a30"/><line x1="778.5" y1="202.4" x2="778.5" y2="211.7"/><rect x="777.5" y="204.2" width="2" height="5.0" fill="#4a3a30"/><line x1="781.5" y1="204.5" x2="781.5" y2="212.6"/><rect x="780.5" y="204.7" width="2" height="5.4" fill="#fb9c50"/><line x1="784.5" y1="206.3" x2="784.5" y2="216.8"/><rect x="783.5" y="210.2" width="2" height="2.0" fill="#fb9c50"/><line x1="786.5" y1="205.4" x2="786.5" y2="227.4"/><rect x="785.5" y="212.0" width="2" height="13.1" fill="#fb9c50"/><line x1="789.5" y1="214.7" x2="789.5" y2="229.8"/><rect x="788.5" y="220.2" width="2" height="5.0" fill="#4a3a30"/><line x1="792.5" y1="220.6" x2="792.5" y2="232.4"/><rect x="791.5" y="220.6" width="2" height="7.9" fill="#fb9c50"/><line x1="795.5" y1="224.9" x2="795.5" y2="234.0"/><rect x="794.5" y="228.5" width="2" height="2.0" fill="#fb9c50"/><line x1="797.5" y1="226.3" x2="797.5" y2="235.7"/><rect x="796.5" y="228.9" width="2" height="2.0" fill="#fb9c50"/><line x1="800.5" y1="221.6" x2="800.5" y2="232.7"/><rect x="799.5" y="223.7" width="2" height="5.9" fill="#4a3a30"/><line x1="803.5" y1="219.6" x2="803.5" y2="227.3"/><rect x="802.5" y="220.2" width="2" height="3.6" fill="#4a3a30"/><line x1="806.5" y1="211.9" x2="806.5" y2="220.9"/><rect x="805.5" y="217.1" width="2" height="3.1" fill="#4a3a30"/><line x1="808.5" y1="205.6" x2="808.5" y2="219.3"/><rect x="807.5" y="207.7" width="2" height="9.3" fill="#4a3a30"/><line x1="811.5" y1="205.6" x2="811.5" y2="214.2"/><rect x="810.5" y="207.2" width="2" height="2.0" fill="#4a3a30"/><line x1="814.5" y1="203.4" x2="814.5" y2="210.1"/><rect x="813.5" y="207.2" width="2" height="2.0" fill="#fb9c50"/><line x1="817.5" y1="200.6" x2="817.5" y2="208.1"/><rect x="816.5" y="201.9" width="2" height="5.5" fill="#4a3a30"/><line x1="820.5" y1="194.0" x2="820.5" y2="204.7"/><rect x="819.5" y="195.1" width="2" height="6.8" fill="#4a3a30"/><line x1="822.5" y1="169.8" x2="822.5" y2="194.2"/><rect x="821.5" y="174.0" width="2" height="20.1" fill="#4a3a30"/><line x1="825.5" y1="169.7" x2="825.5" y2="180.0"/><rect x="824.5" y="174.0" width="2" height="3.2" fill="#fb9c50"/><line x1="828.5" y1="169.3" x2="828.5" y2="174.8"/><rect x="827.5" y="170.3" width="2" height="4.3" fill="#4a3a30"/><line x1="831.5" y1="168.2" x2="831.5" y2="175.3"/><rect x="830.5" y="170.3" width="2" height="3.5" fill="#fb9c50"/><line x1="833.5" y1="171.3" x2="833.5" y2="178.5"/><rect x="832.5" y="173.8" width="2" height="3.0" fill="#fb9c50"/></g><polyline points="84.5,250.0 86.3,248.1 88.9,245.5 91.9,242.5 95.2,239.1 98.5,235.5 101.6,232.0 104.7,228.2 107.9,224.0 111.2,219.7 114.4,215.5 117.4,211.7 120.0,208.6 122.1,206.4 123.7,204.8 125.1,203.6 126.5,202.7 128.2,201.8 130.5,200.7 133.4,199.6 136.8,198.6 140.5,197.7 144.3,196.7 148.0,195.5 151.5,194.0 154.7,192.1 157.8,189.9 160.8,187.5 163.8,184.9 166.9,182.4 170.0,180.0 173.4,177.6 176.9,175.1 180.5,172.6 184.0,170.2 187.2,168.0 190.0,166.0 192.2,164.3 194.0,162.7 195.5,161.3 197.0,160.0 198.6,158.9 200.5,158.0 202.7,157.2 205.1,156.6 207.6,156.1 210.2,155.8 213.0,155.6 216.0,155.5 219.2,155.6 222.7,156.0 226.4,156.4 230.1,157.0 233.8,157.5 237.2,158.0 240.4,158.5 243.4,159.2 246.4,159.9 249.4,160.5 252.4,160.8 255.6,160.7 259.0,160.2 262.5,159.2 266.1,158.1 269.7,156.8 273.2,155.4 276.6,154.0 279.8,152.7 282.8,151.2 285.8,149.7 288.8,148.2 291.8,146.6 295.0,145.0 298.3,143.3 301.8,141.6 305.3,139.8 308.9,138.1 312.5,136.3 316.0,134.5 319.6,132.6 323.4,130.6 327.2,128.6 330.8,126.7 334.1,125.1 337.0,124.0 339.3,123.4 341.0,123.3 342.5,123.5 343.9,123.8 345.5,124.0 347.5,124.0 350.0,123.7 352.9,123.3 355.9,122.8 359.0,122.3 362.1,122.0 365.0,122.0 367.7,122.3 370.3,122.9 372.8,123.6 375.3,124.4 378.0,125.3 380.7,126.0 383.5,126.7 386.3,127.4 389.2,128.2 392.2,128.9 395.5,129.5 399.0,130.0 403.0,130.4 407.4,130.6 412.0,130.8 416.7,130.9 421.2,131.0 425.4,131.0 429.2,131.1 432.9,131.2 436.4,131.2 439.8,131.1 443.1,130.7 446.4,130.0 449.6,128.8 452.7,127.2 455.7,125.3 458.7,123.3 461.7,121.3 464.7,119.4 467.8,117.6 471.0,115.6 474.2,113.7 477.3,111.8 480.2,110.2 483.0,108.9 485.5,108.0 487.7,107.3 489.8,106.8 491.8,106.5 493.9,106.3 496.2,106.2 498.7,106.2 501.3,106.2 503.9,106.4 506.6,106.7 509.3,107.1 512.0,107.5 514.7,108.0 517.4,108.7 520.1,109.4 522.7,110.2 525.3,110.9 527.7,111.5 529.8,112.0 531.7,112.3 533.5,112.7 535.4,113.0 537.5,113.3 540.0,113.8 543.0,114.3 546.5,114.9 550.1,115.5 553.9,116.1 557.5,116.9 561.0,117.7 564.3,118.7 567.5,119.8 570.7,121.0 573.8,122.2 576.7,123.3 579.4,124.3 581.9,125.2 584.1,126.0 586.1,126.7 588.1,127.4 590.2,127.9 592.5,128.2 594.9,128.3 597.4,128.1 600.0,127.8 602.7,127.5 605.4,127.2 608.2,127.0 611.2,127.0 614.3,127.0 617.6,127.1 620.8,127.2 623.8,127.1 626.6,127.0 629.1,126.7 631.3,126.3 633.3,125.8 635.3,125.3 637.4,124.8 639.7,124.3 642.2,123.9 644.8,123.4 647.4,123.0 650.1,122.6 652.8,122.1 655.5,121.7 658.1,121.1 660.7,120.5 663.4,119.8 666.0,119.2 668.6,118.9 671.2,119.0 673.8,119.7 676.5,120.8 679.1,122.2 681.7,123.6 684.4,124.8 687.0,125.6 689.7,125.8 692.4,125.7 695.1,125.4 697.7,125.0 700.3,124.6 702.7,124.3 704.9,124.0 706.9,123.7 708.9,123.3 710.8,123.1 712.8,123.0 715.0,123.3 717.4,123.9 720.1,124.9 722.8,126.1 725.5,127.3 728.2,128.6 730.7,129.9 733.0,131.0 735.2,132.1 737.3,133.2 739.4,134.5 741.6,135.9 743.9,137.7 746.3,139.9 748.8,142.6 751.4,145.4 754.1,148.3 756.8,151.1 759.6,153.5 762.5,155.5 765.5,157.2 768.6,158.8 771.8,160.4 774.9,162.1 778.0,164.0 781.1,166.3 784.3,168.8 787.5,171.4 790.7,174.0 793.6,176.4 796.4,178.4 798.9,180.0 801.2,181.4 803.3,182.6 805.3,183.6 807.4,184.4 809.5,185.0 811.7,185.4 813.9,185.5 816.1,185.4 818.3,185.2 820.5,185.1 822.6,185.0 824.8,185.0 827.1,185.0 829.3,185.0 831.4,185.0 833.1,185.0 834.4,185.0" fill="none" stroke="#b8262a" stroke-width="1.1" stroke-linejoin="round"/><polyline points="47.8,250.0 49.6,245.9 52.0,240.1 54.9,233.3 58.2,226.2 61.6,219.5 65.0,214.0 68.6,209.6 72.6,205.7 76.8,202.2 80.9,199.1 84.9,196.0 88.5,193.0 91.8,190.1 94.8,187.4 97.7,184.8 100.5,182.3 103.0,179.7 105.5,177.0 107.9,173.9 110.1,170.6 112.2,167.3 114.1,164.0 115.9,161.1 117.4,158.7 118.6,156.8 119.5,155.3 120.3,154.1 120.9,153.2 121.7,152.5 122.6,152.0 123.7,151.7 124.9,151.8 126.2,152.0 127.6,152.4 129.0,152.9 130.5,153.5 132.0,154.2 133.6,155.1 135.3,156.1 137.0,157.1 138.9,158.0 141.0,158.7 143.4,159.2 146.1,159.7 149.0,160.1 151.9,160.3 154.5,160.3 156.7,160.0 158.4,159.4 159.8,158.7 161.0,157.7 162.1,156.5 163.2,155.1 164.6,153.5 166.1,151.6 167.7,149.4 169.4,147.0 171.1,144.6 173.0,142.2 175.0,140.0 177.3,137.9 179.9,135.9 182.7,133.9 185.3,132.1 187.9,130.5 190.0,129.2 191.7,128.2 193.2,127.6 194.5,127.1 195.6,126.9 196.8,126.7 198.0,126.6 199.3,126.5 200.5,126.5 201.7,126.6 203.0,126.8 204.3,127.3 205.7,128.0 207.2,129.0 208.8,130.4 210.5,131.9 212.2,133.6 214.1,135.3 216.0,137.0 218.1,138.8 220.3,140.7 222.7,142.7 225.0,144.6 227.3,146.3 229.4,147.6 231.3,148.4 233.1,148.7 234.9,148.9 236.6,149.0 238.3,149.3 240.0,150.0 241.8,151.3 243.6,153.1 245.4,155.0 247.1,156.9 248.8,158.4 250.4,159.4 251.8,159.7 253.0,159.6 254.2,159.1 255.3,158.4 256.6,157.6 258.0,156.8 259.6,155.9 261.4,154.7 263.3,153.5 265.2,152.2 267.0,151.0 268.7,150.0 270.1,149.2 271.3,148.5 272.5,148.0 273.7,147.4 275.0,146.9 276.6,146.3 278.5,145.7 280.5,145.3 282.7,144.8 284.9,144.2 287.3,143.4 289.7,142.4 292.2,141.1 294.8,139.6 297.4,137.9 300.2,136.0 302.9,134.0 305.5,131.9 308.1,129.6 310.6,127.0 313.2,124.4 315.7,121.6 318.3,118.8 321.0,116.0 323.9,113.0 326.9,109.5 330.0,106.1 333.1,103.0 335.9,100.5 338.3,99.0 340.3,98.7 341.9,99.5 343.3,100.9 344.6,102.6 346.0,104.3 347.5,105.6 349.2,106.6 351.0,107.6 352.9,108.6 354.7,109.5 356.4,110.3 358.0,110.9 359.3,111.1 360.5,111.0 361.5,110.7 362.5,110.5 363.7,110.7 365.0,111.5 366.5,113.0 368.1,115.2 369.7,117.7 371.5,120.3 373.4,122.7 375.5,124.6 377.8,126.0 380.4,127.1 383.1,128.0 385.8,128.7 388.5,129.4 391.0,130.0 393.3,130.6 395.3,131.1 397.4,131.5 399.4,131.9 401.8,132.2 404.4,132.5 407.5,132.8 410.9,133.1 414.6,133.4 418.3,133.6 422.0,133.7 425.4,133.8 428.7,133.8 432.0,133.8 435.2,133.7 438.3,133.5 441.1,133.1 443.7,132.5 445.8,131.7 447.5,130.6 449.0,129.4 450.4,128.1 452.0,126.4 454.0,124.6 456.3,122.5 458.9,120.0 461.7,117.4 464.5,114.6 467.3,111.8 470.0,108.9 472.7,105.8 475.4,102.4 478.2,98.9 480.9,95.6 483.4,92.7 485.7,90.5 487.8,89.0 489.6,88.1 491.3,87.6 492.9,87.5 494.5,87.6 496.2,87.9 497.9,88.4 499.6,89.1 501.3,90.2 503.0,91.4 504.8,92.8 506.7,94.4 508.8,96.3 511.0,98.6 513.3,101.0 515.6,103.5 517.8,105.7 519.9,107.5 521.8,108.9 523.6,110.0 525.4,110.8 527.1,111.6 528.7,112.2 530.4,112.8 532.0,113.3 533.4,113.5 534.9,113.7 536.4,114.0 538.1,114.3 540.0,115.0 542.3,116.0 544.8,117.2 547.5,118.6 550.2,120.1 553.0,121.6 555.7,123.0 558.3,124.3 561.0,125.6 563.6,126.9 566.2,128.2 568.9,129.5 571.5,130.9 574.2,132.5 576.8,134.3 579.5,136.1 582.2,137.8 584.7,139.1 587.2,140.0 589.6,140.3 592.0,140.1 594.3,139.7 596.5,139.0 598.5,138.2 600.4,137.4 602.0,136.5 603.3,135.3 604.5,134.1 605.6,132.8 606.8,131.7 608.2,130.9 609.8,130.4 611.4,130.1 613.1,129.9 614.9,129.8 616.8,129.8 618.7,129.6 620.7,129.4 622.9,129.3 625.1,129.2 627.4,129.0 629.7,128.7 631.9,128.2 634.1,127.4 636.4,126.4 638.6,125.2 640.8,124.0 643.0,122.8 645.0,121.7 646.8,120.7 648.5,119.6 650.1,118.5 651.7,117.5 653.5,116.8 655.5,116.4 657.9,116.3 660.5,116.5 663.4,117.0 666.2,117.5 668.8,118.2 671.2,119.0 673.3,119.9 675.1,121.0 676.8,122.2 678.4,123.4 680.0,124.6 681.7,125.6 683.5,126.5 685.2,127.4 687.0,128.3 688.7,129.0 690.5,129.4 692.2,129.6 693.9,129.4 695.6,128.8 697.3,128.1 699.1,127.2 700.8,126.3 702.7,125.6 704.7,124.8 706.7,123.8 708.9,122.9 711.0,122.1 713.0,121.8 715.0,122.0 716.8,122.8 718.4,124.2 720.0,125.9 721.7,127.9 723.5,130.1 725.5,132.5 727.8,135.1 730.3,138.1 733.0,141.2 735.8,144.5 738.5,147.7 741.2,150.9 743.8,153.9 746.5,156.9 749.1,159.9 751.7,162.9 754.4,166.0 757.0,169.2 759.7,172.7 762.3,176.5 765.0,180.4 767.7,184.1 770.2,187.4 772.7,190.2 775.0,192.2 777.2,193.6 779.3,194.6 781.4,195.5 783.6,196.5 785.9,198.0 788.4,200.0 791.0,202.5 793.8,205.1 796.5,207.6 799.1,209.7 801.6,211.2 804.0,212.1 806.3,212.5 808.5,212.5 810.6,212.3 812.7,211.8 814.7,211.2 816.6,210.4 818.4,209.2 820.2,207.8 821.9,206.3 823.6,204.8 825.2,203.4 826.9,202.0 828.7,200.5 830.5,199.0 832.1,197.6 833.4,196.4 834.4,195.5" fill="none" stroke="#1616c8" stroke-width="1.1" stroke-linejoin="round"/><line x1="18" y1="155.5" x2="893" y2="155.5" stroke="#1ec81e" stroke-width="1.5"/><line x1="18" y1="177.5" x2="893" y2="177.5" stroke="#d0d0d0" stroke-width="1.5"/><line x1="18" y1="195" x2="893" y2="195" stroke="#a8282e" stroke-width="2"/></g>
<g fill="#d02a2a"><rect x="19" y="294.0" width="1.6" height="1.2"/><rect x="22" y="294.1" width="1.6" height="1.2"/><rect x="25" y="294.2" width="1.6" height="1.2"/><rect x="27" y="294.3" width="1.6" height="1.2"/><rect x="30" y="294.4" width="1.6" height="1.2"/><rect x="33" y="294.5" width="1.6" height="1.2"/><rect x="36" y="294.5" width="1.6" height="1.2"/><rect x="38" y="294.6" width="1.6" height="1.2"/><rect x="41" y="294.7" width="1.6" height="1.2"/><rect x="44" y="294.8" width="1.6" height="1.2"/><rect x="47" y="294.9" width="1.6" height="1.2"/><rect x="49" y="294.4" width="1.6" height="1.2"/><rect x="52" y="293.7" width="1.6" height="1.2"/><rect x="55" y="292.9" width="1.6" height="2.0"/><rect x="58" y="292.2" width="1.6" height="2.7"/><rect x="61" y="291.5" width="1.6" height="3.4"/><rect x="63" y="291.4" width="1.6" height="3.5"/><rect x="66" y="293.3" width="1.6" height="1.6"/><rect x="69" y="294.5" width="1.6" height="1.2"/><rect x="72" y="294.9" width="1.6" height="1.2"/><rect x="74" y="294.9" width="1.6" height="2.1"/><rect x="77" y="294.9" width="1.6" height="3.0"/><rect x="80" y="294.9" width="1.6" height="3.9"/><rect x="83" y="294.9" width="1.6" height="4.3"/><rect x="85" y="294.9" width="1.6" height="3.6"/><rect x="88" y="294.9" width="1.6" height="3.3"/><rect x="91" y="294.9" width="1.6" height="3.1"/><rect x="94" y="294.9" width="1.6" height="2.8"/><rect x="97" y="294.9" width="1.6" height="2.6"/><rect x="99" y="294.9" width="1.6" height="2.8"/><rect x="102" y="294.9" width="1.6" height="3.2"/><rect x="105" y="294.9" width="1.6" height="3.5"/><rect x="108" y="294.9" width="1.6" height="1.2"/><rect x="110" y="294.6" width="1.6" height="1.2"/><rect x="113" y="293.6" width="1.6" height="1.3"/><rect x="116" y="292.6" width="1.6" height="2.3"/><rect x="119" y="293.5" width="1.6" height="1.4"/><rect x="121" y="294.5" width="1.6" height="1.2"/><rect x="124" y="294.7" width="1.6" height="1.2"/><rect x="127" y="294.9" width="1.6" height="3.1"/><rect x="130" y="294.9" width="1.6" height="6.2"/><rect x="133" y="294.9" width="1.6" height="7.0"/><rect x="135" y="294.9" width="1.6" height="7.9"/><rect x="138" y="294.9" width="1.6" height="8.8"/><rect x="141" y="294.9" width="1.6" height="8.4"/><rect x="144" y="294.9" width="1.6" height="7.2"/><rect x="146" y="294.9" width="1.6" height="6.5"/><rect x="149" y="294.9" width="1.6" height="6.2"/><rect x="152" y="294.9" width="1.6" height="5.9"/><rect x="155" y="294.9" width="1.6" height="5.4"/><rect x="158" y="294.9" width="1.6" height="4.0"/><rect x="160" y="294.9" width="1.6" height="2.8"/><rect x="163" y="294.9" width="1.6" height="1.9"/><rect x="166" y="294.9" width="1.6" height="1.2"/><rect x="169" y="293.4" width="1.6" height="1.5"/><rect x="171" y="292.6" width="1.6" height="2.3"/><rect x="174" y="292.1" width="1.6" height="2.8"/><rect x="177" y="292.4" width="1.6" height="2.5"/><rect x="180" y="292.8" width="1.6" height="2.1"/><rect x="182" y="293.1" width="1.6" height="1.8"/><rect x="185" y="293.5" width="1.6" height="1.4"/><rect x="188" y="293.9" width="1.6" height="1.2"/><rect x="191" y="294.3" width="1.6" height="1.2"/><rect x="194" y="294.7" width="1.6" height="1.2"/><rect x="196" y="294.9" width="1.6" height="1.2"/><rect x="199" y="294.9" width="1.6" height="1.6"/><rect x="202" y="294.9" width="1.6" height="3.0"/><rect x="205" y="294.9" width="1.6" height="4.4"/><rect x="207" y="294.9" width="1.6" height="5.8"/><rect x="210" y="294.9" width="1.6" height="7.1"/><rect x="213" y="294.9" width="1.6" height="7.6"/><rect x="216" y="294.9" width="1.6" height="7.8"/><rect x="218" y="294.9" width="1.6" height="8.0"/><rect x="221" y="294.9" width="1.6" height="8.2"/><rect x="224" y="294.9" width="1.6" height="8.5"/><rect x="227" y="294.9" width="1.6" height="8.2"/><rect x="230" y="294.9" width="1.6" height="7.4"/><rect x="232" y="294.9" width="1.6" height="6.7"/><rect x="235" y="294.9" width="1.6" height="6.0"/><rect x="238" y="294.9" width="1.6" height="3.6"/><rect x="241" y="294.9" width="1.6" height="3.4"/><rect x="243" y="294.9" width="1.6" height="3.4"/><rect x="246" y="294.9" width="1.6" height="3.6"/><rect x="249" y="294.9" width="1.6" height="3.8"/><rect x="252" y="294.9" width="1.6" height="3.3"/><rect x="254" y="294.9" width="1.6" height="1.2"/><rect x="257" y="294.9" width="1.6" height="1.2"/><rect x="260" y="294.4" width="1.6" height="1.2"/><rect x="263" y="293.7" width="1.6" height="1.2"/><rect x="266" y="293.0" width="1.6" height="1.9"/><rect x="268" y="292.3" width="1.6" height="2.6"/><rect x="271" y="292.5" width="1.6" height="2.4"/><rect x="274" y="292.6" width="1.6" height="2.3"/><rect x="277" y="292.8" width="1.6" height="2.1"/><rect x="279" y="293.0" width="1.6" height="1.9"/><rect x="282" y="293.1" width="1.6" height="1.8"/><rect x="285" y="293.2" width="1.6" height="1.7"/><rect x="288" y="293.2" width="1.6" height="1.7"/><rect x="290" y="293.3" width="1.6" height="1.6"/><rect x="293" y="293.5" width="1.6" height="1.4"/><rect x="296" y="293.6" width="1.6" height="1.3"/><rect x="299" y="293.7" width="1.6" height="1.2"/><rect x="302" y="293.7" width="1.6" height="1.2"/><rect x="304" y="293.8" width="1.6" height="1.2"/><rect x="307" y="293.9" width="1.6" height="1.2"/><rect x="310" y="293.9" width="1.6" height="1.2"/><rect x="313" y="294.0" width="1.6" height="1.2"/><rect x="315" y="294.1" width="1.6" height="1.2"/><rect x="318" y="293.5" width="1.6" height="1.4"/><rect x="321" y="292.7" width="1.6" height="2.2"/><rect x="324" y="292.0" width="1.6" height="2.9"/><rect x="326" y="291.6" width="1.6" height="3.3"/><rect x="329" y="292.1" width="1.6" height="2.8"/><rect x="332" y="292.5" width="1.6" height="2.4"/><rect x="335" y="292.9" width="1.6" height="2.0"/><rect x="338" y="294.0" width="1.6" height="1.2"/><rect x="340" y="294.9" width="1.6" height="1.7"/><rect x="343" y="294.9" width="1.6" height="3.5"/><rect x="346" y="294.9" width="1.6" height="5.2"/><rect x="349" y="294.9" width="1.6" height="6.9"/><rect x="351" y="294.9" width="1.6" height="7.1"/><rect x="354" y="294.9" width="1.6" height="7.4"/><rect x="357" y="294.9" width="1.6" height="7.7"/><rect x="360" y="294.9" width="1.6" height="8.1"/><rect x="362" y="294.9" width="1.6" height="7.9"/><rect x="365" y="294.9" width="1.6" height="7.6"/><rect x="368" y="294.9" width="1.6" height="7.3"/><rect x="371" y="294.9" width="1.6" height="6.8"/><rect x="374" y="294.9" width="1.6" height="6.9"/><rect x="376" y="294.9" width="1.6" height="7.3"/><rect x="379" y="294.9" width="1.6" height="7.6"/><rect x="382" y="294.9" width="1.6" height="7.1"/><rect x="385" y="294.9" width="1.6" height="5.6"/><rect x="387" y="294.9" width="1.6" height="4.3"/><rect x="390" y="294.9" width="1.6" height="3.0"/><rect x="393" y="294.9" width="1.6" height="2.3"/><rect x="396" y="294.9" width="1.6" height="1.6"/><rect x="398" y="294.9" width="1.6" height="1.2"/><rect x="401" y="294.9" width="1.6" height="1.2"/><rect x="404" y="294.9" width="1.6" height="1.2"/><rect x="407" y="294.9" width="1.6" height="1.2"/><rect x="410" y="294.9" width="1.6" height="1.2"/><rect x="412" y="294.9" width="1.6" height="1.2"/><rect x="415" y="294.9" width="1.6" height="1.2"/><rect x="418" y="294.9" width="1.6" height="1.2"/><rect x="421" y="294.9" width="1.6" height="1.2"/><rect x="423" y="294.8" width="1.6" height="1.2"/><rect x="426" y="294.6" width="1.6" height="1.2"/><rect x="429" y="294.5" width="1.6" height="1.2"/><rect x="432" y="294.3" width="1.6" height="1.2"/><rect x="434" y="294.2" width="1.6" height="1.2"/><rect x="437" y="294.1" width="1.6" height="1.2"/><rect x="440" y="294.1" width="1.6" height="1.2"/><rect x="443" y="294.1" width="1.6" height="1.2"/><rect x="446" y="293.9" width="1.6" height="1.2"/><rect x="448" y="293.0" width="1.6" height="1.9"/><rect x="451" y="292.1" width="1.6" height="2.8"/><rect x="454" y="291.3" width="1.6" height="3.6"/><rect x="457" y="290.4" width="1.6" height="4.5"/><rect x="459" y="289.5" width="1.6" height="5.4"/><rect x="462" y="289.4" width="1.6" height="5.5"/><rect x="465" y="289.8" width="1.6" height="5.1"/><rect x="468" y="290.3" width="1.6" height="4.6"/><rect x="471" y="290.8" width="1.6" height="4.1"/><rect x="473" y="291.3" width="1.6" height="3.6"/><rect x="476" y="291.6" width="1.6" height="3.3"/><rect x="479" y="291.7" width="1.6" height="3.2"/><rect x="482" y="291.7" width="1.6" height="3.2"/><rect x="484" y="291.5" width="1.6" height="3.4"/><rect x="487" y="291.4" width="1.6" height="3.5"/><rect x="490" y="293.2" width="1.6" height="1.7"/><rect x="493" y="294.9" width="1.6" height="1.2"/><rect x="495" y="294.9" width="1.6" height="1.2"/><rect x="498" y="294.9" width="1.6" height="2.3"/><rect x="501" y="294.9" width="1.6" height="4.1"/><rect x="504" y="294.9" width="1.6" height="5.8"/><rect x="507" y="294.9" width="1.6" height="6.8"/><rect x="509" y="294.9" width="1.6" height="7.7"/><rect x="512" y="294.9" width="1.6" height="7.7"/><rect x="515" y="294.9" width="1.6" height="7.4"/><rect x="518" y="294.9" width="1.6" height="7.1"/><rect x="520" y="294.9" width="1.6" height="7.6"/><rect x="523" y="294.9" width="1.6" height="7.0"/><rect x="526" y="294.9" width="1.6" height="5.7"/><rect x="529" y="294.9" width="1.6" height="4.5"/><rect x="531" y="294.9" width="1.6" height="3.8"/><rect x="534" y="294.9" width="1.6" height="3.0"/><rect x="537" y="294.9" width="1.6" height="2.2"/><rect x="540" y="294.9" width="1.6" height="1.4"/><rect x="543" y="294.9" width="1.6" height="1.2"/><rect x="545" y="294.9" width="1.6" height="1.2"/><rect x="548" y="294.9" width="1.6" height="1.2"/><rect x="551" y="294.9" width="1.6" height="1.2"/><rect x="554" y="294.9" width="1.6" height="1.2"/><rect x="556" y="294.9" width="1.6" height="1.2"/><rect x="559" y="294.9" width="1.6" height="1.2"/><rect x="562" y="294.9" width="1.6" height="1.2"/><rect x="565" y="294.9" width="1.6" height="1.2"/><rect x="567" y="294.9" width="1.6" height="1.3"/><rect x="570" y="294.9" width="1.6" height="1.5"/><rect x="573" y="294.9" width="1.6" height="1.7"/><rect x="576" y="294.9" width="1.6" height="1.8"/><rect x="579" y="294.9" width="1.6" height="2.0"/><rect x="581" y="294.9" width="1.6" height="2.1"/><rect x="584" y="294.9" width="1.6" height="2.2"/><rect x="587" y="294.9" width="1.6" height="2.0"/><rect x="590" y="294.9" width="1.6" height="1.2"/><rect x="592" y="294.9" width="1.6" height="1.2"/><rect x="595" y="294.5" width="1.6" height="1.2"/><rect x="598" y="294.0" width="1.6" height="1.2"/><rect x="601" y="291.8" width="1.6" height="3.1"/><rect x="603" y="290.1" width="1.6" height="4.8"/><rect x="606" y="288.6" width="1.6" height="6.3"/><rect x="609" y="288.8" width="1.6" height="6.1"/><rect x="612" y="290.1" width="1.6" height="4.8"/><rect x="615" y="291.1" width="1.6" height="3.8"/><rect x="617" y="291.9" width="1.6" height="3.0"/><rect x="620" y="292.6" width="1.6" height="2.3"/><rect x="623" y="293.2" width="1.6" height="1.7"/><rect x="626" y="293.6" width="1.6" height="1.3"/><rect x="628" y="294.1" width="1.6" height="1.2"/><rect x="631" y="294.3" width="1.6" height="1.2"/><rect x="634" y="294.5" width="1.6" height="1.2"/><rect x="637" y="294.6" width="1.6" height="1.2"/><rect x="639" y="294.4" width="1.6" height="1.2"/><rect x="642" y="294.3" width="1.6" height="1.2"/><rect x="645" y="294.2" width="1.6" height="1.2"/><rect x="648" y="294.1" width="1.6" height="1.2"/><rect x="651" y="294.5" width="1.6" height="1.2"/><rect x="653" y="294.9" width="1.6" height="1.2"/><rect x="656" y="294.9" width="1.6" height="1.2"/><rect x="659" y="294.9" width="1.6" height="1.2"/><rect x="662" y="294.9" width="1.6" height="1.3"/><rect x="664" y="294.9" width="1.6" height="1.9"/><rect x="667" y="294.9" width="1.6" height="1.9"/><rect x="670" y="294.9" width="1.6" height="1.8"/><rect x="673" y="294.9" width="1.6" height="2.2"/><rect x="675" y="294.9" width="1.6" height="3.3"/><rect x="678" y="294.9" width="1.6" height="4.3"/><rect x="681" y="294.9" width="1.6" height="5.4"/><rect x="684" y="294.9" width="1.6" height="6.1"/><rect x="687" y="294.9" width="1.6" height="5.1"/><rect x="689" y="294.9" width="1.6" height="4.1"/><rect x="692" y="294.9" width="1.6" height="3.0"/><rect x="695" y="294.9" width="1.6" height="2.8"/><rect x="698" y="294.9" width="1.6" height="2.1"/><rect x="700" y="294.9" width="1.6" height="1.5"/><rect x="703" y="294.9" width="1.6" height="1.2"/><rect x="706" y="294.9" width="1.6" height="1.2"/><rect x="709" y="294.5" width="1.6" height="1.2"/><rect x="711" y="293.9" width="1.6" height="1.2"/><rect x="714" y="293.7" width="1.6" height="1.2"/><rect x="717" y="294.9" width="1.6" height="1.2"/><rect x="720" y="294.9" width="1.6" height="3.3"/><rect x="723" y="294.9" width="1.6" height="5.1"/><rect x="725" y="294.9" width="1.6" height="5.2"/><rect x="728" y="294.9" width="1.6" height="5.1"/><rect x="731" y="294.9" width="1.6" height="5.0"/><rect x="734" y="294.9" width="1.6" height="5.2"/><rect x="736" y="294.9" width="1.6" height="5.8"/><rect x="739" y="294.9" width="1.6" height="6.2"/><rect x="742" y="294.9" width="1.6" height="6.7"/><rect x="745" y="294.9" width="1.6" height="7.1"/><rect x="748" y="294.9" width="1.6" height="7.6"/><rect x="750" y="294.9" width="1.6" height="6.9"/><rect x="753" y="294.9" width="1.6" height="6.3"/><rect x="756" y="294.9" width="1.6" height="6.0"/><rect x="759" y="294.9" width="1.6" height="5.6"/><rect x="761" y="294.9" width="1.6" height="5.1"/><rect x="764" y="294.9" width="1.6" height="4.6"/><rect x="767" y="294.9" width="1.6" height="4.0"/><rect x="770" y="294.9" width="1.6" height="3.6"/><rect x="772" y="294.9" width="1.6" height="2.7"/><rect x="775" y="294.9" width="1.6" height="1.3"/><rect x="778" y="294.9" width="1.6" height="1.2"/><rect x="781" y="294.5" width="1.6" height="1.2"/><rect x="784" y="294.2" width="1.6" height="1.2"/><rect x="786" y="294.4" width="1.6" height="1.2"/><rect x="789" y="294.7" width="1.6" height="1.2"/><rect x="792" y="294.9" width="1.6" height="1.2"/><rect x="795" y="294.9" width="1.6" height="1.2"/><rect x="797" y="294.9" width="1.6" height="1.2"/><rect x="800" y="294.1" width="1.6" height="1.2"/><rect x="803" y="292.9" width="1.6" height="2.0"/><rect x="806" y="291.8" width="1.6" height="3.1"/><rect x="808" y="291.4" width="1.6" height="3.5"/><rect x="811" y="291.0" width="1.6" height="3.9"/><rect x="814" y="290.6" width="1.6" height="4.3"/><rect x="817" y="290.1" width="1.6" height="4.8"/><rect x="820" y="290.1" width="1.6" height="4.8"/><rect x="822" y="289.2" width="1.6" height="5.7"/><rect x="825" y="287.8" width="1.6" height="7.1"/><rect x="828" y="286.8" width="1.6" height="8.1"/><rect x="831" y="287.5" width="1.6" height="7.4"/><rect x="833" y="288.2" width="1.6" height="6.7"/></g><polyline points="18.0,271.0 21.4,271.0 26.2,271.1 31.8,271.2 37.6,271.1 43.1,270.7 47.5,270.0 50.9,268.6 53.8,266.7 56.3,264.5 58.6,262.4 60.7,260.6 62.7,259.6 64.6,259.4 66.3,259.7 67.9,260.5 69.3,261.5 70.8,262.5 72.3,263.5 73.8,264.5 75.3,265.7 76.7,266.9 78.2,268.1 79.9,269.2 81.8,270.0 84.1,270.5 86.7,270.7 89.5,270.7 92.3,270.7 94.8,270.8 97.0,271.0 98.7,271.5 100.0,272.2 101.1,273.0 102.2,273.7 103.4,274.1 104.8,274.0 106.5,273.2 108.5,271.9 110.5,270.3 112.5,268.6 114.5,267.2 116.2,266.3 117.7,265.9 119.1,265.7 120.4,265.7 121.6,266.0 122.8,266.5 123.9,267.3 124.9,268.4 125.8,269.8 126.6,271.5 127.5,273.2 128.5,275.1 129.6,276.8 130.9,278.6 132.3,280.4 133.7,282.4 135.4,284.2 137.1,285.9 139.1,287.3 141.4,288.5 144.1,289.5 146.9,290.4 149.7,291.1 152.2,291.6 154.4,292.0 156.1,292.3 157.4,292.4 158.4,292.4 159.5,292.2 160.6,291.8 162.0,291.2 163.7,290.2 165.6,288.7 167.6,287.0 169.7,285.3 171.7,283.8 173.5,282.6 175.2,281.7 176.7,281.1 178.1,280.6 179.6,280.2 181.2,279.9 183.0,279.7 185.0,279.5 187.1,279.3 189.3,279.1 191.6,279.2 194.0,279.7 196.4,280.6 198.9,282.2 201.4,284.3 204.1,286.8 206.7,289.4 209.2,291.8 211.7,294.0 214.1,295.9 216.4,297.7 218.7,299.5 220.9,301.0 223.0,302.4 225.0,303.6 226.9,304.5 228.9,305.2 230.7,305.7 232.3,306.1 233.8,306.3 235.0,306.4 235.7,306.3 236.0,305.9 236.1,305.4 236.2,305.0 236.6,304.6 237.6,304.5 239.2,304.9 241.1,305.7 243.4,306.7 245.9,307.5 248.4,307.8 251.0,307.4 253.7,306.0 256.5,303.7 259.5,301.1 262.5,298.3 265.4,295.8 268.2,294.0 270.9,292.9 273.4,292.3 276.0,292.0 278.5,291.8 281.0,291.6 283.5,291.2 286.0,290.6 288.5,290.0 291.0,289.4 293.6,288.7 296.1,288.0 298.8,287.3 301.6,286.6 304.7,285.8 307.8,285.1 310.8,284.3 313.6,283.5 316.0,282.6 318.0,281.6 319.7,280.5 321.1,279.4 322.5,278.4 323.9,277.5 325.5,276.8 327.3,276.3 329.2,275.7 331.1,275.4 333.1,275.3 335.1,275.6 337.0,276.4 338.9,278.0 340.8,280.2 342.7,282.9 344.6,285.6 346.5,288.1 348.4,290.2 350.3,291.8 352.2,293.1 354.1,294.2 356.1,295.1 358.0,296.0 359.9,296.9 361.8,297.7 363.8,298.3 365.7,298.8 367.6,299.3 369.5,299.9 371.3,300.7 373.0,301.8 374.6,303.1 376.2,304.5 377.8,305.8 379.3,306.8 380.9,307.4 382.5,307.4 384.0,307.1 385.5,306.4 387.1,305.7 388.7,305.0 390.4,304.5 392.1,304.3 393.8,304.1 395.5,304.1 397.4,304.0 399.5,303.8 401.9,303.6 404.7,303.3 407.8,302.8 411.2,302.4 414.6,301.9 417.9,301.3 421.0,300.7 423.8,300.0 426.6,299.1 429.3,298.1 431.8,297.2 434.2,296.5 436.3,296.0 438.1,296.0 439.4,296.3 440.6,296.9 441.9,297.3 443.2,297.4 445.0,296.9 447.2,295.6 449.7,293.7 452.4,291.4 455.1,289.1 457.8,287.0 460.3,285.4 462.6,284.3 464.9,283.6 467.1,283.1 469.2,282.7 471.4,282.3 473.6,281.6 475.9,280.7 478.3,279.5 480.7,278.3 483.0,277.2 485.1,276.4 487.0,275.9 488.5,275.7 489.7,275.7 490.7,275.9 491.8,276.4 493.0,277.3 494.7,278.7 496.9,280.8 499.4,283.7 502.1,287.0 504.9,290.3 507.6,293.4 510.0,295.9 512.1,297.8 514.2,299.5 516.1,300.8 517.9,302.0 519.6,302.9 521.4,303.6 523.1,304.1 524.7,304.2 526.3,304.1 527.9,304.0 529.4,303.7 531.0,303.6 532.5,303.5 533.8,303.3 535.2,303.0 536.6,302.8 538.4,302.7 540.5,302.6 543.1,302.6 546.2,302.7 549.6,302.9 553.0,303.1 556.4,303.3 559.6,303.6 562.7,304.0 565.8,304.4 568.8,304.9 571.7,305.5 574.4,306.0 576.8,306.4 578.8,306.8 580.5,307.3 581.9,307.8 583.3,308.2 584.7,308.4 586.3,308.3 588.1,308.0 590.1,307.4 592.0,306.7 594.0,305.8 596.0,304.8 597.8,303.6 599.5,302.1 601.0,300.1 602.4,298.1 603.9,296.0 605.5,294.3 607.3,293.1 609.3,292.5 611.4,292.4 613.6,292.6 615.9,292.9 618.3,293.1 620.7,293.1 623.2,292.9 625.8,292.6 628.5,292.3 631.1,292.0 633.7,291.6 636.0,291.2 638.1,290.7 640.0,290.1 641.9,289.5 643.7,288.9 645.5,288.5 647.4,288.3 649.4,288.3 651.6,288.5 653.7,288.9 655.8,289.3 657.9,289.8 660.0,290.2 662.0,290.5 663.9,290.8 665.8,291.2 667.7,291.6 669.6,292.2 671.5,293.1 673.4,294.4 675.3,296.2 677.2,298.2 679.1,300.0 681.0,301.6 682.9,302.6 684.7,303.0 686.4,303.0 688.2,302.7 690.0,302.2 692.0,301.5 694.4,300.7 697.3,299.6 700.6,298.0 704.1,296.2 707.6,294.6 710.8,293.4 713.5,293.1 715.6,293.8 717.4,295.2 718.8,297.1 720.2,299.2 721.5,301.1 723.0,302.6 724.5,303.5 726.0,304.0 727.4,304.4 729.0,304.8 730.7,305.4 732.6,306.4 734.9,307.9 737.4,309.7 740.1,311.8 742.9,313.8 745.5,315.6 747.9,316.9 750.0,317.7 752.0,318.2 753.8,318.4 755.6,318.6 757.4,318.6 759.3,318.8 761.2,319.1 763.1,319.4 764.9,319.7 766.8,319.9 768.8,319.9 770.8,319.8 772.9,319.4 775.1,318.8 777.3,318.0 779.6,317.2 781.9,316.5 784.1,316.0 786.3,315.7 788.6,315.7 790.8,315.7 793.0,315.7 795.3,315.5 797.5,315.0 799.8,314.1 802.1,312.9 804.4,311.5 806.7,310.0 808.9,308.6 810.9,307.4 812.7,306.4 814.4,305.5 816.0,304.6 817.5,303.7 819.0,302.8 820.4,301.7 821.8,300.4 823.1,298.8 824.4,297.2 825.7,295.7 826.9,294.2 828.0,293.1 829.1,292.3 830.3,291.6 831.4,291.1 832.4,290.7 833.2,290.4 833.8,290.2" fill="none" stroke="#14146e" stroke-width="1.1"/><polyline points="18.0,272.0 21.3,271.8 26.0,271.7 31.6,271.5 37.3,271.1 42.8,270.7 47.5,270.0 51.4,269.0 55.1,267.6 58.4,266.1 61.5,264.6 64.2,263.4 66.6,262.5 68.5,262.0 69.8,261.8 70.9,261.8 71.8,261.9 72.8,262.2 74.2,262.5 75.9,262.9 77.8,263.6 79.7,264.3 81.7,265.0 83.7,265.7 85.7,266.3 87.6,266.7 89.5,267.0 91.3,267.3 93.2,267.6 95.1,267.9 97.0,268.2 98.9,268.7 100.8,269.3 102.7,270.0 104.6,270.5 106.6,270.9 108.6,271.0 110.8,270.7 113.1,270.0 115.5,269.2 117.9,268.3 120.1,267.6 122.0,267.3 123.5,267.3 124.7,267.4 125.7,267.7 126.7,268.2 128.0,269.0 129.6,270.0 131.7,271.5 134.1,273.4 136.8,275.6 139.5,277.8 142.3,279.8 144.9,281.6 147.5,283.1 150.2,284.4 152.9,285.7 155.5,286.7 157.9,287.6 160.0,288.3 161.6,288.8 162.9,289.0 163.9,289.1 164.9,289.0 166.2,288.8 167.8,288.3 169.9,287.5 172.4,286.4 175.1,285.0 177.8,283.7 180.5,282.5 183.0,281.6 185.3,281.0 187.6,280.6 189.8,280.3 192.0,280.1 194.2,280.1 196.4,280.3 198.6,280.6 200.9,281.1 203.1,281.8 205.3,282.6 207.6,283.5 209.8,284.5 212.1,285.7 214.3,287.1 216.6,288.6 218.9,290.1 221.1,291.6 223.2,293.0 225.3,294.3 227.4,295.5 229.5,296.8 231.5,297.9 233.4,298.9 235.0,299.7 236.3,300.3 237.3,300.7 238.2,301.0 239.0,301.2 240.1,301.4 241.5,301.7 243.3,302.1 245.4,302.7 247.7,303.2 250.1,303.6 252.5,303.8 254.8,303.6 257.0,303.0 259.0,301.9 261.1,300.7 263.3,299.3 265.6,298.0 268.2,296.9 271.1,296.0 274.1,295.2 277.4,294.4 280.7,293.7 284.1,292.9 287.3,292.1 290.5,291.2 293.7,290.3 296.9,289.3 300.0,288.3 303.2,287.4 306.4,286.4 309.6,285.4 313.0,284.4 316.3,283.3 319.6,282.3 322.6,281.4 325.5,280.6 328.1,279.8 330.4,279.1 332.6,278.4 334.7,277.9 336.7,277.7 338.9,277.8 341.1,278.4 343.3,279.3 345.4,280.6 347.6,281.9 349.9,283.3 352.2,284.5 354.6,285.6 357.2,286.7 359.7,287.7 362.3,288.8 364.9,290.0 367.5,291.2 370.0,292.6 372.5,294.1 374.9,295.6 377.4,297.1 380.0,298.5 382.8,299.7 385.8,300.7 388.9,301.6 392.1,302.4 395.4,303.0 398.7,303.4 401.9,303.6 405.1,303.5 408.4,303.2 411.7,302.6 414.9,302.0 418.0,301.3 421.0,300.7 423.8,300.1 426.6,299.3 429.3,298.6 431.8,297.9 434.2,297.3 436.3,296.9 438.0,296.9 439.3,297.2 440.4,297.6 441.6,298.0 443.0,298.1 445.0,297.8 447.6,297.0 450.7,295.9 454.1,294.5 457.6,293.0 461.0,291.6 464.1,290.2 466.9,288.9 469.6,287.6 472.1,286.2 474.6,284.9 477.0,283.7 479.4,282.6 481.8,281.5 484.0,280.4 486.3,279.4 488.5,278.6 490.6,278.0 492.7,277.8 494.7,278.0 496.6,278.5 498.4,279.2 500.3,280.2 502.2,281.4 504.2,282.6 506.3,284.1 508.6,285.9 510.9,287.8 513.2,289.7 515.5,291.6 517.6,293.1 519.6,294.4 521.5,295.5 523.4,296.5 525.3,297.3 527.1,298.1 529.0,298.8 530.8,299.4 532.5,299.9 534.3,300.3 536.1,300.7 538.1,301.0 540.5,301.3 543.2,301.6 546.3,301.8 549.6,302.0 553.0,302.2 556.3,302.4 559.6,302.6 562.9,302.9 566.3,303.2 569.6,303.5 572.9,303.8 576.0,304.2 578.7,304.5 581.0,304.9 583.1,305.3 584.9,305.7 586.6,306.1 588.3,306.4 590.1,306.4 592.0,306.2 593.9,305.9 595.9,305.5 597.8,304.9 599.7,304.3 601.6,303.6 603.5,302.8 605.3,301.8 607.1,300.8 608.9,299.8 610.9,298.7 613.0,297.8 615.3,296.9 617.7,296.1 620.2,295.3 622.8,294.6 625.5,293.8 628.3,293.1 631.3,292.4 634.4,291.6 637.7,290.9 641.0,290.2 644.3,289.6 647.4,289.2 650.5,289.0 653.8,288.8 657.0,288.8 660.0,288.9 662.7,289.0 665.0,289.2 666.7,289.4 667.9,289.7 668.8,290.0 669.5,290.3 670.4,290.7 671.5,291.2 672.9,291.7 674.4,292.4 675.9,293.0 677.6,293.7 679.3,294.4 681.0,295.0 682.7,295.6 684.4,296.2 686.1,296.8 688.0,297.3 690.1,297.7 692.5,297.8 695.4,297.6 698.7,297.1 702.2,296.5 705.7,295.9 708.9,295.3 711.6,295.0 713.7,294.9 715.3,294.8 716.6,294.9 717.9,295.0 719.3,295.4 721.1,295.9 723.3,296.7 725.8,297.7 728.4,298.8 731.1,300.1 733.8,301.4 736.4,302.6 738.9,303.9 741.5,305.2 744.0,306.6 746.6,307.9 749.1,309.2 751.7,310.3 754.3,311.3 756.9,312.2 759.6,312.9 762.2,313.7 764.7,314.4 767.0,315.0 769.1,315.7 770.9,316.3 772.7,316.9 774.5,317.4 776.3,317.8 778.4,317.9 780.8,317.7 783.4,317.3 786.0,316.7 788.7,316.0 791.3,315.4 793.7,315.0 795.8,314.8 797.8,314.7 799.7,314.6 801.5,314.5 803.3,314.4 805.2,314.0 807.1,313.4 809.1,312.7 811.0,311.9 812.9,311.1 814.8,310.2 816.6,309.3 818.3,308.4 819.9,307.5 821.5,306.6 823.1,305.7 824.6,304.7 826.2,303.6 827.9,302.4 829.7,300.9 831.6,299.4 833.2,298.0 834.7,296.8 835.7,296.0" fill="none" stroke="#ee1c1c" stroke-width="3.3" stroke-linejoin="round"/><polyline points="18.0,272.0 21.3,271.8 26.0,271.7 31.6,271.5 37.3,271.1 42.8,270.7 47.5,270.0 51.4,269.0 55.1,267.6 58.4,266.1 61.5,264.6 64.2,263.4 66.6,262.5 68.5,262.0 69.8,261.8 70.9,261.8 71.8,261.9 72.8,262.2 74.2,262.5 75.9,262.9 77.8,263.6 79.7,264.3 81.7,265.0 83.7,265.7 85.7,266.3 87.6,266.7 89.5,267.0 91.3,267.3 93.2,267.6 95.1,267.9 97.0,268.2 98.9,268.7 100.8,269.3 102.7,270.0 104.6,270.5 106.6,270.9 108.6,271.0 110.8,270.7 113.1,270.0 115.5,269.2 117.9,268.3 120.1,267.6 122.0,267.3 123.5,267.3 124.7,267.4 125.7,267.7 126.7,268.2 128.0,269.0 129.6,270.0 131.7,271.5 134.1,273.4 136.8,275.6 139.5,277.8 142.3,279.8 144.9,281.6 147.5,283.1 150.2,284.4 152.9,285.7 155.5,286.7 157.9,287.6 160.0,288.3 161.6,288.8 162.9,289.0 163.9,289.1 164.9,289.0 166.2,288.8 167.8,288.3 169.9,287.5 172.4,286.4 175.1,285.0 177.8,283.7 180.5,282.5 183.0,281.6 185.3,281.0 187.6,280.6 189.8,280.3 192.0,280.1 194.2,280.1 196.4,280.3 198.6,280.6 200.9,281.1 203.1,281.8 205.3,282.6 207.6,283.5 209.8,284.5 212.1,285.7 214.3,287.1 216.6,288.6 218.9,290.1 221.1,291.6 223.2,293.0 225.3,294.3 227.4,295.5 229.5,296.8 231.5,297.9 233.4,298.9 235.0,299.7 236.3,300.3 237.3,300.7 238.2,301.0 239.0,301.2 240.1,301.4 241.5,301.7 243.3,302.1 245.4,302.7 247.7,303.2 250.1,303.6 252.5,303.8 254.8,303.6 257.0,303.0 259.0,301.9 261.1,300.7 263.3,299.3 265.6,298.0 268.2,296.9 271.1,296.0 274.1,295.2 277.4,294.4 280.7,293.7 284.1,292.9 287.3,292.1 290.5,291.2 293.7,290.3 296.9,289.3 300.0,288.3 303.2,287.4 306.4,286.4 309.6,285.4 313.0,284.4 316.3,283.3 319.6,282.3 322.6,281.4 325.5,280.6 328.1,279.8 330.4,279.1 332.6,278.4 334.7,277.9 336.7,277.7 338.9,277.8 341.1,278.4 343.3,279.3 345.4,280.6 347.6,281.9 349.9,283.3 352.2,284.5 354.6,285.6 357.2,286.7 359.7,287.7 362.3,288.8 364.9,290.0 367.5,291.2 370.0,292.6 372.5,294.1 374.9,295.6 377.4,297.1 380.0,298.5 382.8,299.7 385.8,300.7 388.9,301.6 392.1,302.4 395.4,303.0 398.7,303.4 401.9,303.6 405.1,303.5 408.4,303.2 411.7,302.6 414.9,302.0 418.0,301.3 421.0,300.7 423.8,300.1 426.6,299.3 429.3,298.6 431.8,297.9 434.2,297.3 436.3,296.9 438.0,296.9 439.3,297.2 440.4,297.6 441.6,298.0 443.0,298.1 445.0,297.8 447.6,297.0 450.7,295.9 454.1,294.5 457.6,293.0 461.0,291.6 464.1,290.2 466.9,288.9 469.6,287.6 472.1,286.2 474.6,284.9 477.0,283.7 479.4,282.6 481.8,281.5 484.0,280.4 486.3,279.4 488.5,278.6 490.6,278.0 492.7,277.8 494.7,278.0 496.6,278.5 498.4,279.2 500.3,280.2 502.2,281.4 504.2,282.6 506.3,284.1 508.6,285.9 510.9,287.8 513.2,289.7 515.5,291.6 517.6,293.1 519.6,294.4 521.5,295.5 523.4,296.5 525.3,297.3 527.1,298.1 529.0,298.8 530.8,299.4 532.5,299.9 534.3,300.3 536.1,300.7 538.1,301.0 540.5,301.3 543.2,301.6 546.3,301.8 549.6,302.0 553.0,302.2 556.3,302.4 559.6,302.6 562.9,302.9 566.3,303.2 569.6,303.5 572.9,303.8 576.0,304.2 578.7,304.5 581.0,304.9 583.1,305.3 584.9,305.7 586.6,306.1 588.3,306.4 590.1,306.4 592.0,306.2 593.9,305.9 595.9,305.5 597.8,304.9 599.7,304.3 601.6,303.6 603.5,302.8 605.3,301.8 607.1,300.8 608.9,299.8 610.9,298.7 613.0,297.8 615.3,296.9 617.7,296.1 620.2,295.3 622.8,294.6 625.5,293.8 628.3,293.1 631.3,292.4 634.4,291.6 637.7,290.9 641.0,290.2 644.3,289.6 647.4,289.2 650.5,289.0 653.8,288.8 657.0,288.8 660.0,288.9 662.7,289.0 665.0,289.2 666.7,289.4 667.9,289.7 668.8,290.0 669.5,290.3 670.4,290.7 671.5,291.2 672.9,291.7 674.4,292.4 675.9,293.0 677.6,293.7 679.3,294.4 681.0,295.0 682.7,295.6 684.4,296.2 686.1,296.8 688.0,297.3 690.1,297.7 692.5,297.8 695.4,297.6 698.7,297.1 702.2,296.5 705.7,295.9 708.9,295.3 711.6,295.0 713.7,294.9 715.3,294.8 716.6,294.9 717.9,295.0 719.3,295.4 721.1,295.9 723.3,296.7 725.8,297.7 728.4,298.8 731.1,300.1 733.8,301.4 736.4,302.6 738.9,303.9 741.5,305.2 744.0,306.6 746.6,307.9 749.1,309.2 751.7,310.3 754.3,311.3 756.9,312.2 759.6,312.9 762.2,313.7 764.7,314.4 767.0,315.0 769.1,315.7 770.9,316.3 772.7,316.9 774.5,317.4 776.3,317.8 778.4,317.9 780.8,317.7 783.4,317.3 786.0,316.7 788.7,316.0 791.3,315.4 793.7,315.0 795.8,314.8 797.8,314.7 799.7,314.6 801.5,314.5 803.3,314.4 805.2,314.0 807.1,313.4 809.1,312.7 811.0,311.9 812.9,311.1 814.8,310.2 816.6,309.3 818.3,308.4 819.9,307.5 821.5,306.6 823.1,305.7 824.6,304.7 826.2,303.6 827.9,302.4 829.7,300.9 831.6,299.4 833.2,298.0 834.7,296.8 835.7,296.0" fill="none" stroke="#ff8080" stroke-width="1.1" stroke-dasharray="1 2"/><defs><linearGradient id="rg" x1="0" y1="0" x2="0" y2="1"><stop offset="0" stop-color="#5e3610"/><stop offset="1" stop-color="#403c3c"/></linearGradient><clipPath id="c70"><rect x="18" y="342.8" width="816" height="52"/></clipPath><clipPath id="a70"><rect x="18" y="300" width="816" height="43.3"/></clipPath></defs><polygon points="18.4,394.8 18.4,343.2 20.7,357.5 23.6,345.0 26.5,350.8 29.3,348.0 33.1,352.7 37.9,348.9 45.6,340.3 50.3,338.4 53.2,341.3 56.0,335.5 61.8,333.3 65.6,344.1 70.4,347.0 76.1,352.7 81.8,350.8 87.6,346.0 93.3,340.3 97.1,345.0 101.9,358.5 110.5,343.2 115.3,334.6 119.1,347.0 124.8,362.3 129.6,371.8 134.4,366.1 137.2,376.6 141.0,369.9 148.7,366.1 151.6,362.3 155.4,375.7 160.2,362.3 167.8,358.5 171.6,350.8 179.2,353.7 183.0,351.8 186.9,361.3 190.7,354.6 196.4,356.6 200.3,367.1 206.0,368.0 207.9,381.4 213.6,374.7 221.3,381.4 229.9,390.9 237.6,367.0 248.1,386.2 254.8,365.2 260.6,367.0 266.3,361.3 271.1,353.7 274.9,364.2 280.6,365.2 287.3,362.3 291.1,355.6 294.9,358.5 297.8,353.7 301.6,360.4 308.3,351.8 314.0,347.0 317.9,343.2 322.6,337.1 326.4,340.3 329.3,337.1 331.2,344.1 336.0,343.2 339.8,364.2 343.6,378.5 348.4,376.6 355.1,381.4 364.6,365.2 366.6,369.0 373.2,390.9 377.0,382.3 382.8,382.3 387.6,369.0 393.3,381.4 401.9,370.9 407.6,373.7 409.5,368.0 414.3,369.9 421.0,380.4 423.9,367.0 429.6,365.2 438.2,367.0 441.0,377.6 443.9,370.9 446.8,369.9 451.7,349.9 455.5,356.6 460.3,352.7 466.0,354.6 473.6,345.1 478.4,348.0 482.2,339.0 485.1,344.1 488.0,342.2 490.8,361.3 494.7,366.1 498.5,368.0 502.3,379.5 508.0,379.5 515.7,389.0 519.5,382.3 523.3,382.3 527.1,374.7 533.8,372.8 537.6,386.2 543.4,370.9 548.1,376.6 560.0,385.0 575.0,383.0 588.2,374.7 595.9,371.8 600.7,363.2 604.5,345.1 609.2,371.8 612.1,367.0 617.8,360.4 622.6,366.1 626.4,363.2 629.3,368.0 636.9,355.6 642.7,360.4 648.4,351.8 655.1,359.4 660.8,371.8 668.6,363.2 675.3,379.5 682.0,392.8 684.8,377.6 688.6,375.7 694.4,363.2 700.1,364.2 702.0,362.3 704.9,367.0 706.8,361.3 709.7,369.0 715.4,361.3 719.2,380.4 724.0,390.0 726.8,381.4 731.6,381.4 734.5,385.2 737.3,385.2 741.2,391.9 744.0,392.8 747.9,396.7 751.7,388.0 755.5,390.0 759.3,393.8 763.1,390.9 770.8,393.8 776.5,383.3 784.1,384.3 791.8,393.8 797.5,387.1 805.2,374.7 812.8,369.0 818.5,367.0 823.3,350.8 826.2,348.9 830.0,352.7 833.8,353.7 833.8,394.8" fill="url(#rg)" clip-path="url(#c70)"/><line x1="35" y1="342.8" x2="834" y2="342.8" stroke="#1414a8" stroke-width="1.7"/><line x1="18" y1="394.8" x2="834" y2="394.8" stroke="#1414a8" stroke-width="1.7"/><polyline points="18.4,343.2 20.7,357.5 23.6,345.0 26.5,350.8 29.3,348.0 33.1,352.7 37.9,348.9 45.6,340.3 50.3,338.4 53.2,341.3 56.0,335.5 61.8,333.3 65.6,344.1 70.4,347.0 76.1,352.7 81.8,350.8 87.6,346.0 93.3,340.3 97.1,345.0 101.9,358.5 110.5,343.2 115.3,334.6 119.1,347.0 124.8,362.3 129.6,371.8 134.4,366.1 137.2,376.6 141.0,369.9 148.7,366.1 151.6,362.3 155.4,375.7 160.2,362.3 167.8,358.5 171.6,350.8 179.2,353.7 183.0,351.8 186.9,361.3 190.7,354.6 196.4,356.6 200.3,367.1 206.0,368.0 207.9,381.4 213.6,374.7 221.3,381.4 229.9,390.9 237.6,367.0 248.1,386.2 254.8,365.2 260.6,367.0 266.3,361.3 271.1,353.7 274.9,364.2 280.6,365.2 287.3,362.3 291.1,355.6 294.9,358.5 297.8,353.7 301.6,360.4 308.3,351.8 314.0,347.0 317.9,343.2 322.6,337.1 326.4,340.3 329.3,337.1 331.2,344.1 336.0,343.2 339.8,364.2 343.6,378.5 348.4,376.6 355.1,381.4 364.6,365.2 366.6,369.0 373.2,390.9 377.0,382.3 382.8,382.3 387.6,369.0 393.3,381.4 401.9,370.9 407.6,373.7 409.5,368.0 414.3,369.9 421.0,380.4 423.9,367.0 429.6,365.2 438.2,367.0 441.0,377.6 443.9,370.9 446.8,369.9 451.7,349.9 455.5,356.6 460.3,352.7 466.0,354.6 473.6,345.1 478.4,348.0 482.2,339.0 485.1,344.1 488.0,342.2 490.8,361.3 494.7,366.1 498.5,368.0 502.3,379.5 508.0,379.5 515.7,389.0 519.5,382.3 523.3,382.3 527.1,374.7 533.8,372.8 537.6,386.2 543.4,370.9 548.1,376.6 560.0,385.0 575.0,383.0 588.2,374.7 595.9,371.8 600.7,363.2 604.5,345.1 609.2,371.8 612.1,367.0 617.8,360.4 622.6,366.1 626.4,363.2 629.3,368.0 636.9,355.6 642.7,360.4 648.4,351.8 655.1,359.4 660.8,371.8 668.6,363.2 675.3,379.5 682.0,392.8 684.8,377.6 688.6,375.7 694.4,363.2 700.1,364.2 702.0,362.3 704.9,367.0 706.8,361.3 709.7,369.0 715.4,361.3 719.2,380.4 724.0,390.0 726.8,381.4 731.6,381.4 734.5,385.2 737.3,385.2 741.2,391.9 744.0,392.8 747.9,396.7 751.7,388.0 755.5,390.0 759.3,393.8 763.1,390.9 770.8,393.8 776.5,383.3 784.1,384.3 791.8,393.8 797.5,387.1 805.2,374.7 812.8,369.0 818.5,367.0 823.3,350.8 826.2,348.9 830.0,352.7 833.8,353.7" fill="none" stroke="#f39030" stroke-width="1.05"/><polyline points="18.4,343.2 20.7,357.5 23.6,345.0 26.5,350.8 29.3,348.0 33.1,352.7 37.9,348.9 45.6,340.3 50.3,338.4 53.2,341.3 56.0,335.5 61.8,333.3 65.6,344.1 70.4,347.0 76.1,352.7 81.8,350.8 87.6,346.0 93.3,340.3 97.1,345.0 101.9,358.5 110.5,343.2 115.3,334.6 119.1,347.0 124.8,362.3 129.6,371.8 134.4,366.1 137.2,376.6 141.0,369.9 148.7,366.1 151.6,362.3 155.4,375.7 160.2,362.3 167.8,358.5 171.6,350.8 179.2,353.7 183.0,351.8 186.9,361.3 190.7,354.6 196.4,356.6 200.3,367.1 206.0,368.0 207.9,381.4 213.6,374.7 221.3,381.4 229.9,390.9 237.6,367.0 248.1,386.2 254.8,365.2 260.6,367.0 266.3,361.3 271.1,353.7 274.9,364.2 280.6,365.2 287.3,362.3 291.1,355.6 294.9,358.5 297.8,353.7 301.6,360.4 308.3,351.8 314.0,347.0 317.9,343.2 322.6,337.1 326.4,340.3 329.3,337.1 331.2,344.1 336.0,343.2 339.8,364.2 343.6,378.5 348.4,376.6 355.1,381.4 364.6,365.2 366.6,369.0 373.2,390.9 377.0,382.3 382.8,382.3 387.6,369.0 393.3,381.4 401.9,370.9 407.6,373.7 409.5,368.0 414.3,369.9 421.0,380.4 423.9,367.0 429.6,365.2 438.2,367.0 441.0,377.6 443.9,370.9 446.8,369.9 451.7,349.9 455.5,356.6 460.3,352.7 466.0,354.6 473.6,345.1 478.4,348.0 482.2,339.0 485.1,344.1 488.0,342.2 490.8,361.3 494.7,366.1 498.5,368.0 502.3,379.5 508.0,379.5 515.7,389.0 519.5,382.3 523.3,382.3 527.1,374.7 533.8,372.8 537.6,386.2 543.4,370.9 548.1,376.6 560.0,385.0 575.0,383.0 588.2,374.7 595.9,371.8 600.7,363.2 604.5,345.1 609.2,371.8 612.1,367.0 617.8,360.4 622.6,366.1 626.4,363.2 629.3,368.0 636.9,355.6 642.7,360.4 648.4,351.8 655.1,359.4 660.8,371.8 668.6,363.2 675.3,379.5 682.0,392.8 684.8,377.6 688.6,375.7 694.4,363.2 700.1,364.2 702.0,362.3 704.9,367.0 706.8,361.3 709.7,369.0 715.4,361.3 719.2,380.4 724.0,390.0 726.8,381.4 731.6,381.4 734.5,385.2 737.3,385.2 741.2,391.9 744.0,392.8 747.9,396.7 751.7,388.0 755.5,390.0 759.3,393.8 763.1,390.9 770.8,393.8 776.5,383.3 784.1,384.3 791.8,393.8 797.5,387.1 805.2,374.7 812.8,369.0 818.5,367.0 823.3,350.8 826.2,348.9 830.0,352.7 833.8,353.7" fill="none" stroke="#c040c8" stroke-width="1.05" clip-path="url(#a70)"/><line x1="46.5" y1="39.0" x2="46.5" y2="249.5" stroke="#707d8a" stroke-width="1" stroke-dasharray="3 3"/><line x1="46.5" y1="273" x2="46.5" y2="322.5" stroke="#707d8a" stroke-width="1" stroke-dasharray="3 3"/><line x1="46.5" y1="329.0" x2="46.5" y2="398.5" stroke="#707d8a" stroke-width="1" stroke-dasharray="3 3"/><line x1="129.5" y1="39.5" x2="129.5" y2="250.5" stroke="#7b8fa0" stroke-width="1.3"/><line x1="129.5" y1="256.5" x2="129.5" y2="323.5" stroke="#7b8fa0" stroke-width="1.3"/><line x1="129.5" y1="329.5" x2="129.5" y2="399.5" stroke="#7b8fa0" stroke-width="1.3"/><line x1="212.5" y1="39.0" x2="212.5" y2="249.5" stroke="#707d8a" stroke-width="1" stroke-dasharray="3 3"/><line x1="212.5" y1="256.0" x2="212.5" y2="322.5" stroke="#707d8a" stroke-width="1" stroke-dasharray="3 3"/><line x1="212.5" y1="329.0" x2="212.5" y2="398.5" stroke="#707d8a" stroke-width="1" stroke-dasharray="3 3"/><line x1="296.5" y1="39.0" x2="296.5" y2="249.5" stroke="#707d8a" stroke-width="1" stroke-dasharray="3 3"/><line x1="296.5" y1="256.0" x2="296.5" y2="322.5" stroke="#707d8a" stroke-width="1" stroke-dasharray="3 3"/><line x1="296.5" y1="329.0" x2="296.5" y2="398.5" stroke="#707d8a" stroke-width="1" stroke-dasharray="3 3"/><line x1="379.5" y1="39.0" x2="379.5" y2="249.5" stroke="#707d8a" stroke-width="1" stroke-dasharray="3 3"/><line x1="379.5" y1="256.0" x2="379.5" y2="322.5" stroke="#707d8a" stroke-width="1" stroke-dasharray="3 3"/><line x1="379.5" y1="329.0" x2="379.5" y2="398.5" stroke="#707d8a" stroke-width="1" stroke-dasharray="3 3"/><line x1="462.5" y1="39.0" x2="462.5" y2="249.5" stroke="#707d8a" stroke-width="1" stroke-dasharray="3 3"/><line x1="462.5" y1="256.0" x2="462.5" y2="322.5" stroke="#707d8a" stroke-width="1" stroke-dasharray="3 3"/><line x1="462.5" y1="329.0" x2="462.5" y2="398.5" stroke="#707d8a" stroke-width="1" stroke-dasharray="3 3"/><line x1="546.5" y1="39.5" x2="546.5" y2="250.5" stroke="#7b8fa0" stroke-width="1.3"/><line x1="546.5" y1="256.5" x2="546.5" y2="323.5" stroke="#7b8fa0" stroke-width="1.3"/><line x1="546.5" y1="329.5" x2="546.5" y2="399.5" stroke="#7b8fa0" stroke-width="1.3"/><line x1="629.5" y1="39.0" x2="629.5" y2="249.5" stroke="#707d8a" stroke-width="1" stroke-dasharray="3 3"/><line x1="629.5" y1="256.0" x2="629.5" y2="322.5" stroke="#707d8a" stroke-width="1" stroke-dasharray="3 3"/><line x1="629.5" y1="329.0" x2="629.5" y2="398.5" stroke="#707d8a" stroke-width="1" stroke-dasharray="3 3"/><line x1="712.5" y1="39.0" x2="712.5" y2="249.5" stroke="#707d8a" stroke-width="1" stroke-dasharray="3 3"/><line x1="712.5" y1="256.0" x2="712.5" y2="322.5" stroke="#707d8a" stroke-width="1" stroke-dasharray="3 3"/><line x1="712.5" y1="329.0" x2="712.5" y2="398.5" stroke="#707d8a" stroke-width="1" stroke-dasharray="3 3"/><line x1="795.5" y1="39.0" x2="795.5" y2="249.5" stroke="#707d8a" stroke-width="1" stroke-dasharray="3 3"/><line x1="795.5" y1="256.0" x2="795.5" y2="322.5" stroke="#707d8a" stroke-width="1" stroke-dasharray="3 3"/><line x1="795.5" y1="329.0" x2="795.5" y2="398.5" stroke="#707d8a" stroke-width="1" stroke-dasharray="3 3"/><line x1="59" y1="267.5" x2="890" y2="267.5" stroke="#707d8a" stroke-width="1" stroke-dasharray="3 3"/><line x1="17" y1="295.5" x2="890" y2="295.5" stroke="#707d8a" stroke-width="1" stroke-dasharray="3 3"/><line x1="17" y1="355.5" x2="890" y2="355.5" stroke="#707d8a" stroke-width="1" stroke-dasharray="3 3"/><line x1="17" y1="381.5" x2="890" y2="381.5" stroke="#707d8a" stroke-width="1" stroke-dasharray="3 3"/><rect x="17.5" y="39.5" width="876" height="211.0" fill="none" stroke="#aec2d2" stroke-width="1.1"/><rect x="17.5" y="256.5" width="876" height="67.0" fill="none" stroke="#aec2d2" stroke-width="1.1"/><rect x="17.5" y="329.5" width="876" height="70.0" fill="none" stroke="#aec2d2" stroke-width="1.1"/><line x1="894" y1="44.5" x2="897.5" y2="44.5" stroke="#c8d4dc" stroke-width="1"/><line x1="894" y1="94.5" x2="897.5" y2="94.5" stroke="#c8d4dc" stroke-width="1"/><line x1="894" y1="144.5" x2="897.5" y2="144.5" stroke="#c8d4dc" stroke-width="1"/><line x1="894" y1="193.5" x2="897.5" y2="193.5" stroke="#c8d4dc" stroke-width="1"/><line x1="894" y1="243.5" x2="897.5" y2="243.5" stroke="#c8d4dc" stroke-width="1"/><line x1="894" y1="267.5" x2="897.5" y2="267.5" stroke="#c8d4dc" stroke-width="1"/><line x1="894" y1="295.5" x2="897.5" y2="295.5" stroke="#c8d4dc" stroke-width="1"/><line x1="894" y1="355.5" x2="897.5" y2="355.5" stroke="#c8d4dc" stroke-width="1"/><line x1="894" y1="381.5" x2="897.5" y2="381.5" stroke="#c8d4dc" stroke-width="1"/><line x1="46.5" y1="400" x2="46.5" y2="403" stroke="#c8d4dc" stroke-width="1"/><line x1="129.5" y1="400" x2="129.5" y2="403" stroke="#c8d4dc" stroke-width="1"/><line x1="212.5" y1="400" x2="212.5" y2="403" stroke="#c8d4dc" stroke-width="1"/><line x1="296.5" y1="400" x2="296.5" y2="403" stroke="#c8d4dc" stroke-width="1"/><line x1="379.5" y1="400" x2="379.5" y2="403" stroke="#c8d4dc" stroke-width="1"/><line x1="462.5" y1="400" x2="462.5" y2="403" stroke="#c8d4dc" stroke-width="1"/><line x1="546.5" y1="400" x2="546.5" y2="403" stroke="#c8d4dc" stroke-width="1"/><line x1="629.5" y1="400" x2="629.5" y2="403" stroke="#c8d4dc" stroke-width="1"/><line x1="712.5" y1="400" x2="712.5" y2="403" stroke="#c8d4dc" stroke-width="1"/><line x1="795.5" y1="400" x2="795.5" y2="403" stroke="#c8d4dc" stroke-width="1"/><rect x="48" y="40.5" width="245" height="14" fill="#3b414a"/><text x="47.5" y="51.5" font-family="Liberation Sans, sans-serif" font-size="10" fill="#e02020" textLength="105.5" lengthAdjust="spacingAndGlyphs">ential_Moving_Average</text><text x="157.7" y="51.5" font-family="Liberation Sans, sans-serif" font-size="10" fill="#1818d8" textLength="132.7" lengthAdjust="spacingAndGlyphs">Exponential_Moving_Average</text><rect x="18" y="39" width="30" height="22" fill="#f2f2f2"/><rect x="18" y="39" width="30" height="5" fill="#d0d0d0"/><defs><linearGradient id="rb" x1="0" y1="0" x2="0" y2="1"><stop offset="0" stop-color="#f25555"/><stop offset="1" stop-color="#c81e1e"/></linearGradient><linearGradient id="bb" x1="0" y1="0" x2="0" y2="1"><stop offset="0" stop-color="#3fb0ee"/><stop offset="1" stop-color="#1a78c8"/></linearGradient></defs><rect x="21.5" y="47.5" width="9" height="9" rx="1.8" fill="url(#rb)" stroke="#8c1010" stroke-width="1"/><rect x="34.5" y="47.5" width="9" height="9" rx="1.8" fill="url(#bb)" stroke="#0f4a86" stroke-width="1"/><text x="19.7" y="267.9" font-family="Liberation Sans, sans-serif" font-size="11" fill="#16167e" textLength="27.6" lengthAdjust="spacingAndGlyphs">MACD</text><rect x="18" y="330" width="17" height="12" fill="#3b414a"/><text x="19.3" y="341" font-family="Liberation Sans, sans-serif" font-size="10.8" fill="#e8802c" textLength="14.7" lengthAdjust="spacingAndGlyphs">RSI</text><rect x="18.5" y="376.5" width="69" height="19" rx="1.5" fill="#5f6d7e" stroke="#a8bccb" stroke-width="1"/><line x1="18.5" y1="376" x2="18.5" y2="403" stroke="#d8eaee" stroke-width="1.6"/><text x="25.4" y="390" font-family="Liberation Sans, sans-serif" font-size="11.3" fill="#f2f2f2" stroke="#f2f2f2" stroke-width="0.25" textLength="54.9" lengthAdjust="spacingAndGlyphs">Июль 2020</text><rect x="130.5" y="376.5" width="58.5" height="19" rx="1.5" fill="#5f6d7e" stroke="#a8bccb" stroke-width="1"/><line x1="130.5" y1="376" x2="130.5" y2="403" stroke="#d8eaee" stroke-width="1.6"/><text x="137.4" y="390" font-family="Liberation Sans, sans-serif" font-size="11.3" fill="#f2f2f2" stroke="#f2f2f2" stroke-width="0.25" textLength="44.5" lengthAdjust="spacingAndGlyphs">Авг 2020</text><rect x="546.5" y="376.5" width="60.5" height="19" rx="1.5" fill="#5f6d7e" stroke="#a8bccb" stroke-width="1"/><line x1="546.5" y1="376" x2="546.5" y2="403" stroke="#d8eaee" stroke-width="1.6"/><text x="553.4" y="390" font-family="Liberation Sans, sans-serif" font-size="11.3" fill="#f2f2f2" stroke="#f2f2f2" stroke-width="0.25" textLength="46.2" lengthAdjust="spacingAndGlyphs">Сен 2020</text><text x="900.8" y="51.0" font-family="Liberation Sans, sans-serif" font-size="11" fill="#ffffff" stroke="#ffffff" stroke-width="0.15" textLength="32.6" lengthAdjust="spacingAndGlyphs">1.2000</text><text x="900.8" y="101.0" font-family="Liberation Sans, sans-serif" font-size="11" fill="#ffffff" stroke="#ffffff" stroke-width="0.15" textLength="32.6" lengthAdjust="spacingAndGlyphs">1.1900</text><text x="900.8" y="151.0" font-family="Liberation Sans, sans-serif" font-size="11" fill="#ffffff" stroke="#ffffff" stroke-width="0.15" textLength="32.6" lengthAdjust="spacingAndGlyphs">1.1800</text><text x="900.8" y="200.0" font-family="Liberation Sans, sans-serif" font-size="11" fill="#ffffff" stroke="#ffffff" stroke-width="0.15" textLength="32.6" lengthAdjust="spacingAndGlyphs">1.1700</text><text x="900.8" y="250.0" font-family="Liberation Sans, sans-serif" font-size="11" fill="#ffffff" stroke="#ffffff" stroke-width="0.15" textLength="32.6" lengthAdjust="spacingAndGlyphs">1.1600</text><text x="902" y="273.5" font-family="Liberation Sans, sans-serif" font-size="11" fill="#ffffff" stroke="#ffffff" stroke-width="0.15" textLength="32.5" lengthAdjust="spacingAndGlyphs">+0.005</text><text x="902" y="301.5" font-family="Liberation Sans, sans-serif" font-size="11" fill="#ffffff" stroke="#ffffff" stroke-width="0.15" textLength="32.5" lengthAdjust="spacingAndGlyphs">+0.000</text><text x="901" y="361.5" font-family="Liberation Sans, sans-serif" font-size="11" fill="#ffffff" stroke="#ffffff" stroke-width="0.15">60</text><text x="901" y="387.5" font-family="Liberation Sans, sans-serif" font-size="11" fill="#ffffff" stroke="#ffffff" stroke-width="0.15">40</text><rect x="893" y="167" width="48" height="21" fill="#ffffff"/><text x="901.7" y="181" font-family="Liberation Sans, sans-serif" font-size="11" fill="#3a3a5a" textLength="32.6" lengthAdjust="spacingAndGlyphs">1.1734</text><text x="46.0" y="421.5" font-family="Liberation Sans, sans-serif" font-size="11" fill="#ffffff" stroke="#ffffff" stroke-width="0.2" text-anchor="middle">27</text><text x="129.0" y="421.5" font-family="Liberation Sans, sans-serif" font-size="11" fill="#ffffff" stroke="#ffffff" stroke-width="0.2" text-anchor="middle">3</text><text x="212.0" y="421.5" font-family="Liberation Sans, sans-serif" font-size="11" fill="#ffffff" stroke="#ffffff" stroke-width="0.2" text-anchor="middle">10</text><text x="296.0" y="421.5" font-family="Liberation Sans, sans-serif" font-size="11" fill="#ffffff" stroke="#ffffff" stroke-width="0.2" text-anchor="middle">17</text><text x="379.0" y="421.5" font-family="Liberation Sans, sans-serif" font-size="11" fill="#ffffff" stroke="#ffffff" stroke-width="0.2" text-anchor="middle">24</text><text x="462.0" y="421.5" font-family="Liberation Sans, sans-serif" font-size="11" fill="#ffffff" stroke="#ffffff" stroke-width="0.2" text-anchor="middle">31</text><text x="546.0" y="421.5" font-family="Liberation Sans, sans-serif" font-size="11" fill="#ffffff" stroke="#ffffff" stroke-width="0.2" text-anchor="middle">7</text><text x="629.0" y="421.5" font-family="Liberation Sans, sans-serif" font-size="11" fill="#ffffff" stroke="#ffffff" stroke-width="0.2" text-anchor="middle">14</text><text x="712.0" y="421.5" font-family="Liberation Sans, sans-serif" font-size="11" fill="#ffffff" stroke="#ffffff" stroke-width="0.2" text-anchor="middle">21</text><text x="795.0" y="421.5" font-family="Liberation Sans, sans-serif" font-size="11" fill="#ffffff" stroke="#ffffff" stroke-width="0.2" text-anchor="middle">28</text>
</svg>
</body></html>
